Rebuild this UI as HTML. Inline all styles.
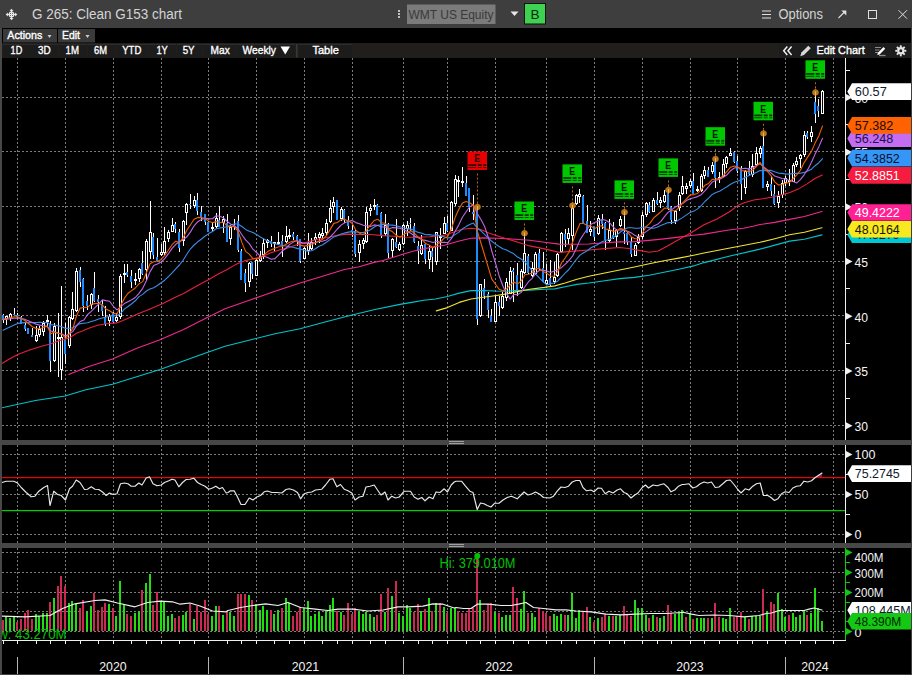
<!DOCTYPE html>
<html><head><meta charset="utf-8"><title>G 265: Clean G153 chart</title>
<style>html,body{margin:0;padding:0;background:#000;overflow:hidden}svg{display:block}text{font-family:"Liberation Sans",Arial,sans-serif}</style>
</head><body><svg width="912" height="675" viewBox="0 0 912 675" font-family="Liberation Sans, Arial, sans-serif"><rect x="0" y="0" width="912" height="675" fill="#000" />
<rect x="0" y="0" width="912" height="28" fill="#3e3e3e" />
<rect x="911" y="28" width="1" height="647" fill="#404040" />
<rect x="0" y="674" width="912" height="1" fill="#404040" />
<g stroke="#e8e8e8" stroke-width="1.2" fill="none"><circle cx="11.5" cy="14.5" r="2.3"/><path d="M11.5 10.0V19.0M7.0 14.5H16.0"/></g>
<g fill="#e8e8e8"><path d="M11.5 8.7l2 2.2h-4z M11.5 20.3l2 -2.2h-4z M5.7 14.5l2.2 -2v4z M17.3 14.5l-2.2 -2v4z"/></g>
<text x="32" y="19.1" font-size="14" fill="#d4d4d4" text-anchor="start" font-weight="normal" textLength="150" lengthAdjust="spacingAndGlyphs" >G 265: Clean G153 chart</text>
<rect x="398" y="10.2" width="2" height="1.6" fill="#e0e0e0" />
<rect x="398" y="13.2" width="2" height="1.6" fill="#e0e0e0" />
<rect x="398" y="16.2" width="2" height="1.6" fill="#e0e0e0" />
<rect x="407" y="4.5" width="88.5" height="19.5" fill="#7b7b7b" />
<text x="408.5" y="19" font-size="13" fill="#3a3a3a" text-anchor="start" font-weight="normal" textLength="85" lengthAdjust="spacingAndGlyphs" >WMT US Equity</text>
<path d="M510.5 11.5h8l-4 4.5z" fill="#e8e8e8"/>
<rect x="524" y="3" width="22" height="21.5" fill="#111" />
<rect x="525" y="4" width="20" height="19.5" fill="#3dd250" />
<text x="535" y="19" font-size="13.5" fill="#0c2a10" text-anchor="middle" font-weight="normal" >B</text>
<rect x="762" y="10.5" width="9" height="1" fill="#e0e0e0" />
<rect x="762" y="14" width="9" height="1" fill="#e0e0e0" />
<rect x="762" y="17.5" width="9" height="1" fill="#e0e0e0" />
<text x="778.5" y="19.3" font-size="14" fill="#d4d4d4" text-anchor="start" font-weight="normal" textLength="44.5" lengthAdjust="spacingAndGlyphs" >Options</text>
<path d="M838.5 18L845 11.5" stroke="#e0e0e0" stroke-width="1.1" fill="none"/><path d="M841.3 10.6h5v5z" fill="#e0e0e0"/>
<rect x="868.500" y="10.5" width="8" height="8" stroke="#e0e0e0" stroke-width="1" fill="none"/>
<path d="M898.500 10.2l8.500 8.500M907 10.2l-8.500 8.500" stroke="#e0e0e0" stroke-width="1" fill="none"/>
<rect x="3" y="29" width="54" height="13.5" fill="#3a3a3a" />
<rect x="58" y="29" width="37" height="13.5" fill="#3a3a3a" />
<text x="7.3" y="38.9" font-size="11" fill="#fff" text-anchor="start" font-weight="normal" textLength="35" lengthAdjust="spacingAndGlyphs"  stroke="#fff" stroke-width="0.35">Actions</text>
<path d="M47.5 35h4l-2 3z" fill="#ccc"/>
<text x="62" y="38.9" font-size="11" fill="#fff" text-anchor="start" font-weight="normal" textLength="18" lengthAdjust="spacingAndGlyphs"  stroke="#fff" stroke-width="0.35">Edit</text>
<path d="M85.5 35h4l-2 3z" fill="#ccc"/>
<rect x="2" y="43" width="909" height="15" fill="#211f1c" />
<rect x="3" y="44" width="28" height="13.5" fill="#1c1c1c" />
<rect x="3" y="44" width="28" height="1" fill="#2c2c2c" />
<text x="10.6" y="53.9" font-size="11" fill="#fff" text-anchor="start" font-weight="normal" textLength="11.6" lengthAdjust="spacingAndGlyphs"  stroke="#fff" stroke-width="0.35">1D</text>
<rect x="31" y="44" width="27" height="13.5" fill="#1c1c1c" />
<rect x="31" y="44" width="27" height="1" fill="#2c2c2c" />
<text x="37.9" y="53.9" font-size="11" fill="#fff" text-anchor="start" font-weight="normal" textLength="12.7" lengthAdjust="spacingAndGlyphs"  stroke="#fff" stroke-width="0.35">3D</text>
<rect x="59" y="44" width="28" height="13.5" fill="#1c1c1c" />
<rect x="59" y="44" width="28" height="1" fill="#2c2c2c" />
<text x="65.6" y="53.9" font-size="11" fill="#fff" text-anchor="start" font-weight="normal" textLength="13.4" lengthAdjust="spacingAndGlyphs"  stroke="#fff" stroke-width="0.35">1M</text>
<rect x="88" y="44" width="28" height="13.5" fill="#1c1c1c" />
<rect x="88" y="44" width="28" height="1" fill="#2c2c2c" />
<text x="94" y="53.9" font-size="11" fill="#fff" text-anchor="start" font-weight="normal" textLength="13" lengthAdjust="spacingAndGlyphs"  stroke="#fff" stroke-width="0.35">6M</text>
<rect x="117" y="44" width="30" height="13.5" fill="#1c1c1c" />
<rect x="117" y="44" width="30" height="1" fill="#2c2c2c" />
<text x="122.2" y="53.9" font-size="11" fill="#fff" text-anchor="start" font-weight="normal" textLength="19.1" lengthAdjust="spacingAndGlyphs"  stroke="#fff" stroke-width="0.35">YTD</text>
<rect x="148" y="44" width="28" height="13.5" fill="#1c1c1c" />
<rect x="148" y="44" width="28" height="1" fill="#2c2c2c" />
<text x="156.4" y="53.9" font-size="11" fill="#fff" text-anchor="start" font-weight="normal" textLength="11.4" lengthAdjust="spacingAndGlyphs"  stroke="#fff" stroke-width="0.35">1Y</text>
<rect x="177" y="44" width="25" height="13.5" fill="#1c1c1c" />
<rect x="177" y="44" width="25" height="1" fill="#2c2c2c" />
<text x="182.7" y="53.9" font-size="11" fill="#fff" text-anchor="start" font-weight="normal" textLength="11.9" lengthAdjust="spacingAndGlyphs"  stroke="#fff" stroke-width="0.35">5Y</text>
<rect x="203" y="44" width="33" height="13.5" fill="#1c1c1c" />
<rect x="203" y="44" width="33" height="1" fill="#2c2c2c" />
<text x="210.6" y="53.9" font-size="11" fill="#fff" text-anchor="start" font-weight="normal" textLength="19.1" lengthAdjust="spacingAndGlyphs"  stroke="#fff" stroke-width="0.35">Max</text>
<rect x="237" y="44" width="58" height="13.5" fill="#1c1c1c" />
<rect x="237" y="44" width="58" height="1" fill="#2c2c2c" />
<text x="242.5" y="53.9" font-size="11" fill="#fff" text-anchor="start" font-weight="normal" textLength="33.5" lengthAdjust="spacingAndGlyphs"  stroke="#fff" stroke-width="0.35">Weekly</text>
<rect x="299" y="44" width="53" height="13.5" fill="#1c1c1c" />
<rect x="299" y="44" width="53" height="1" fill="#2c2c2c" />
<text x="312.4" y="53.9" font-size="11" fill="#fff" text-anchor="start" font-weight="normal" textLength="26.5" lengthAdjust="spacingAndGlyphs"  stroke="#fff" stroke-width="0.35">Table</text>
<path d="M280.5 46.5h9.5l-4.75 8z" fill="#fff"/>
<rect x="296" y="44" width="1.5" height="13.5" fill="#3a3832" />
<rect x="779" y="44" width="16.5" height="13.5" fill="#1c1c1c" />
<rect x="796.5" y="44" width="73.5" height="13.5" fill="#1c1c1c" />
<rect x="871" y="44" width="19" height="13.5" fill="#1c1c1c" />
<rect x="891" y="44" width="19.5" height="13.5" fill="#1c1c1c" />
<path d="M787.3 46.5l-3.6 4.2l3.6 4.2M791.6 46.5l-3.6 4.2l3.6 4.2" stroke="#f0f0f0" stroke-width="1.5" fill="none"/>
<path d="M800.3 56.2l1.1 -3.6l6.9 -6.9l2.5 2.5l-6.9 6.9z" fill="#d8d8d8"/>
<text x="816.4" y="53.9" font-size="11" fill="#fff" text-anchor="start" font-weight="normal" textLength="48.3" lengthAdjust="spacingAndGlyphs"  stroke="#fff" stroke-width="0.35">Edit Chart</text>
<g stroke="#8c8c8c" stroke-width="1" fill="none"><path d="M875 47.5h6M875 50h4.500M875 52.500h3"/><path d="M879 55.500h6.500" stroke-width="1.3"/></g>
<path d="M877.2 55l0.700 -2.300l5.600 -5.600l1.700 1.700l-5.600 5.600z" fill="#fff"/>
<g stroke="#e6e6e6" fill="none"><circle cx="900.8" cy="50.8" r="2.6" stroke-width="2.2"/><path d="M904.20 50.80L906.30 50.80" stroke-width="1.9"/><path d="M903.20 53.20L904.69 54.69" stroke-width="1.9"/><path d="M900.80 54.20L900.80 56.30" stroke-width="1.9"/><path d="M898.40 53.20L896.91 54.69" stroke-width="1.9"/><path d="M897.40 50.80L895.30 50.80" stroke-width="1.9"/><path d="M898.40 48.40L896.91 46.91" stroke-width="1.9"/><path d="M900.80 47.40L900.80 45.30" stroke-width="1.9"/><path d="M903.20 48.40L904.69 46.91" stroke-width="1.9"/></g>
<rect x="2" y="440" width="909" height="5" fill="#474747" />
<rect x="2" y="543" width="909" height="5" fill="#474747" />
<rect x="449" y="441" width="15" height="1" fill="#a0a0a0" />
<rect x="449" y="443" width="15" height="1" fill="#a0a0a0" />
<rect x="449" y="544" width="15" height="1" fill="#a0a0a0" />
<rect x="449" y="546" width="15" height="1" fill="#a0a0a0" />
<g stroke="#7c7c7c" stroke-width="1" stroke-dasharray="2 2" shape-rendering="crispEdges" >
<path d="M17.5 58V440"/>
<path d="M17.5 445V543"/>
<path d="M17.5 548V640"/>
<path d="M65.5 58V440"/>
<path d="M65.5 445V543"/>
<path d="M65.5 548V640"/>
<path d="M113.5 58V440"/>
<path d="M113.5 445V543"/>
<path d="M113.5 548V640"/>
<path d="M161.5 58V440"/>
<path d="M161.5 445V543"/>
<path d="M161.5 548V640"/>
<path d="M208.5 58V440"/>
<path d="M208.5 445V543"/>
<path d="M208.5 548V640"/>
<path d="M256.5 58V440"/>
<path d="M256.5 445V543"/>
<path d="M256.5 548V640"/>
<path d="M304.5 58V440"/>
<path d="M304.5 445V543"/>
<path d="M304.5 548V640"/>
<path d="M352.5 58V440"/>
<path d="M352.5 445V543"/>
<path d="M352.5 548V640"/>
<path d="M403.5 58V440"/>
<path d="M403.5 445V543"/>
<path d="M403.5 548V640"/>
<path d="M447.5 58V440"/>
<path d="M447.5 445V543"/>
<path d="M447.5 548V640"/>
<path d="M495.5 58V440"/>
<path d="M495.5 445V543"/>
<path d="M495.5 548V640"/>
<path d="M546.5 58V440"/>
<path d="M546.5 445V543"/>
<path d="M546.5 548V640"/>
<path d="M594.5 58V440"/>
<path d="M594.5 445V543"/>
<path d="M594.5 548V640"/>
<path d="M642.5 58V440"/>
<path d="M642.5 445V543"/>
<path d="M642.5 548V640"/>
<path d="M690.5 58V440"/>
<path d="M690.5 445V543"/>
<path d="M690.5 548V640"/>
<path d="M737.5 58V440"/>
<path d="M737.5 445V543"/>
<path d="M737.5 548V640"/>
<path d="M785.5 58V440"/>
<path d="M785.5 445V543"/>
<path d="M785.5 548V640"/>
<path d="M833.5 58V440"/>
<path d="M833.5 445V543"/>
<path d="M833.5 548V640"/>
<path d="M2 97.5H845"/>
<path d="M2 151.5H845"/>
<path d="M2 206.5H845"/>
<path d="M2 261.5H845"/>
<path d="M2 315.5H845"/>
<path d="M2 370.5H845"/>
<path d="M2 425.5H845"/>
<path d="M2 454.5H845"/>
<path d="M2 494.5H845"/>
<path d="M2 534.5H845"/>
<path d="M2 552.5H845"/>
<path d="M2 572.5H845"/>
<path d="M2 592.5H845"/>
<path d="M2 611.5H845"/>
<path d="M2 631.5H845"/>
</g>
<g clip-path="url(#cm)">
<defs><clipPath id="cm"><rect x="2" y="58" width="843" height="382"/></clipPath></defs>
<g shape-rendering="crispEdges">
<rect x="3" y="314" width="1" height="9" fill="#fff" />
<rect x="2" y="315" width="2" height="5" fill="#1e8cff" />
<rect x="6" y="316" width="1" height="9" fill="#fff" />
<rect x="5.5" y="316.5" width="2" height="2" fill="#000" stroke="#fff" stroke-width="1"/>
<rect x="10" y="313" width="1" height="8" fill="#fff" />
<rect x="9.5" y="314.5" width="2" height="3" fill="#000" stroke="#fff" stroke-width="1"/>
<rect x="14" y="308" width="1" height="7" fill="#fff" />
<rect x="13" y="314" width="2" height="1" fill="#1e8cff" />
<rect x="17" y="313" width="1" height="6" fill="#fff" />
<rect x="16" y="315" width="2" height="2" fill="#1e8cff" />
<rect x="21" y="316" width="1" height="8" fill="#fff" />
<rect x="20" y="317" width="2" height="7" fill="#1e8cff" />
<rect x="25" y="322" width="1" height="9" fill="#fff" />
<rect x="24" y="325" width="2" height="4" fill="#1e8cff" />
<rect x="28" y="328" width="1" height="6" fill="#fff" />
<rect x="27" y="328" width="2" height="6" fill="#1e8cff" />
<rect x="32" y="328" width="1" height="9" fill="#fff" />
<rect x="31" y="335" width="2" height="2" fill="#1e8cff" />
<rect x="36" y="326" width="1" height="16" fill="#fff" />
<rect x="35.5" y="335.5" width="2" height="5" fill="#000" stroke="#fff" stroke-width="1"/>
<rect x="39" y="326" width="1" height="11" fill="#fff" />
<rect x="38.5" y="329.5" width="2" height="5" fill="#000" stroke="#fff" stroke-width="1"/>
<rect x="43" y="321" width="1" height="15" fill="#fff" />
<rect x="42.5" y="323.5" width="2" height="8" fill="#000" stroke="#fff" stroke-width="1"/>
<rect x="47" y="315" width="1" height="12" fill="#fff" />
<rect x="46" y="320" width="3" height="2" fill="#fff" />
<rect x="50" y="321" width="1" height="51" fill="#fff" />
<rect x="49" y="324" width="2" height="37" fill="#1e8cff" />
<rect x="54" y="323" width="1" height="39" fill="#fff" />
<rect x="53.5" y="326.5" width="2" height="34" fill="#000" stroke="#fff" stroke-width="1"/>
<rect x="58" y="313" width="1" height="64" fill="#fff" />
<rect x="57" y="337" width="3" height="2" fill="#fff" />
<rect x="61" y="286" width="1" height="94" fill="#fff" />
<rect x="60.5" y="337.5" width="2" height="32" fill="#000" stroke="#fff" stroke-width="1"/>
<rect x="65" y="323" width="1" height="41" fill="#fff" />
<rect x="64" y="339" width="2" height="15" fill="#1e8cff" />
<rect x="69" y="316" width="1" height="32" fill="#fff" />
<rect x="68.5" y="317.5" width="2" height="28" fill="#000" stroke="#fff" stroke-width="1"/>
<rect x="72" y="292" width="1" height="28" fill="#fff" />
<rect x="71.5" y="309.5" width="2" height="9" fill="#000" stroke="#fff" stroke-width="1"/>
<rect x="76" y="268" width="1" height="44" fill="#fff" />
<rect x="75.5" y="271.5" width="2" height="39" fill="#000" stroke="#fff" stroke-width="1"/>
<rect x="80" y="267" width="1" height="20" fill="#fff" />
<rect x="79" y="270" width="2" height="12" fill="#1e8cff" />
<rect x="83" y="278" width="1" height="34" fill="#fff" />
<rect x="82" y="279" width="2" height="27" fill="#1e8cff" />
<rect x="87" y="295" width="1" height="15" fill="#fff" />
<rect x="86" y="301" width="2" height="5" fill="#1e8cff" />
<rect x="91" y="293" width="1" height="16" fill="#fff" />
<rect x="90.5" y="294.5" width="2" height="10" fill="#000" stroke="#fff" stroke-width="1"/>
<rect x="94" y="272" width="1" height="30" fill="#fff" />
<rect x="93" y="288" width="2" height="13" fill="#1e8cff" />
<rect x="98" y="295" width="1" height="17" fill="#fff" />
<rect x="97" y="299" width="2" height="3" fill="#1e8cff" />
<rect x="102" y="300" width="1" height="16" fill="#fff" />
<rect x="101" y="304" width="2" height="7" fill="#1e8cff" />
<rect x="105" y="306" width="1" height="20" fill="#fff" />
<rect x="104" y="317" width="2" height="7" fill="#1e8cff" />
<rect x="109" y="314" width="1" height="12" fill="#fff" />
<rect x="108.5" y="316.5" width="2" height="4" fill="#000" stroke="#fff" stroke-width="1"/>
<rect x="113" y="312" width="1" height="11" fill="#fff" />
<rect x="112" y="313" width="2" height="9" fill="#1e8cff" />
<rect x="116" y="313" width="1" height="9" fill="#fff" />
<rect x="115.5" y="317.5" width="2" height="3" fill="#000" stroke="#fff" stroke-width="1"/>
<rect x="120" y="274" width="1" height="45" fill="#fff" />
<rect x="119.5" y="276.5" width="2" height="40" fill="#000" stroke="#fff" stroke-width="1"/>
<rect x="124" y="264" width="1" height="19" fill="#fff" />
<rect x="123" y="273" width="3" height="2" fill="#fff" />
<rect x="127" y="264" width="1" height="13" fill="#fff" />
<rect x="126" y="272" width="2" height="3" fill="#1e8cff" />
<rect x="131" y="270" width="1" height="18" fill="#fff" />
<rect x="130" y="276" width="2" height="6" fill="#1e8cff" />
<rect x="135" y="273" width="1" height="12" fill="#fff" />
<rect x="134" y="279" width="3" height="2" fill="#fff" />
<rect x="139" y="268" width="1" height="14" fill="#fff" />
<rect x="138.5" y="269.5" width="2" height="9" fill="#000" stroke="#fff" stroke-width="1"/>
<rect x="142" y="251" width="1" height="24" fill="#fff" />
<rect x="141" y="263" width="2" height="11" fill="#1e8cff" />
<rect x="146" y="239" width="1" height="41" fill="#fff" />
<rect x="145.5" y="241.5" width="2" height="28" fill="#000" stroke="#fff" stroke-width="1"/>
<rect x="150" y="201" width="1" height="58" fill="#fff" />
<rect x="149.5" y="232.5" width="2" height="19" fill="#000" stroke="#fff" stroke-width="1"/>
<rect x="153" y="233" width="1" height="26" fill="#fff" />
<rect x="152" y="237" width="2" height="18" fill="#1e8cff" />
<rect x="157" y="238" width="1" height="23" fill="#fff" />
<rect x="156" y="257" width="2" height="4" fill="#1e8cff" />
<rect x="161" y="244" width="1" height="12" fill="#fff" />
<rect x="160.5" y="252.5" width="2" height="2" fill="#000" stroke="#fff" stroke-width="1"/>
<rect x="164" y="227" width="1" height="28" fill="#fff" />
<rect x="163.5" y="241.5" width="2" height="11" fill="#000" stroke="#fff" stroke-width="1"/>
<rect x="168" y="230" width="1" height="12" fill="#fff" />
<rect x="167.5" y="232.5" width="2" height="6" fill="#000" stroke="#fff" stroke-width="1"/>
<rect x="172" y="218" width="1" height="14" fill="#fff" />
<rect x="171.5" y="225.5" width="2" height="6" fill="#000" stroke="#fff" stroke-width="1"/>
<rect x="175" y="222" width="1" height="11" fill="#fff" />
<rect x="174" y="224" width="2" height="5" fill="#1e8cff" />
<rect x="179" y="229" width="1" height="23" fill="#fff" />
<rect x="178" y="232" width="2" height="16" fill="#1e8cff" />
<rect x="183" y="220" width="1" height="26" fill="#fff" />
<rect x="182.5" y="221.5" width="2" height="19" fill="#000" stroke="#fff" stroke-width="1"/>
<rect x="186" y="203" width="1" height="22" fill="#fff" />
<rect x="185.5" y="204.5" width="2" height="8" fill="#000" stroke="#fff" stroke-width="1"/>
<rect x="190" y="194" width="1" height="15" fill="#fff" />
<rect x="189" y="204" width="2" height="1" fill="#1e8cff" />
<rect x="194" y="196" width="1" height="12" fill="#fff" />
<rect x="193.5" y="200.5" width="2" height="5" fill="#000" stroke="#fff" stroke-width="1"/>
<rect x="197" y="193" width="1" height="22" fill="#fff" />
<rect x="196" y="200" width="2" height="11" fill="#1e8cff" />
<rect x="201" y="206" width="1" height="15" fill="#fff" />
<rect x="200" y="212" width="2" height="6" fill="#1e8cff" />
<rect x="205" y="214" width="1" height="11" fill="#fff" />
<rect x="204" y="214" width="2" height="8" fill="#1e8cff" />
<rect x="208" y="221" width="1" height="11" fill="#fff" />
<rect x="207" y="222" width="2" height="10" fill="#1e8cff" />
<rect x="212" y="222" width="1" height="9" fill="#fff" />
<rect x="211" y="227" width="3" height="2" fill="#fff" />
<rect x="216" y="213" width="1" height="15" fill="#fff" />
<rect x="215.5" y="218.5" width="2" height="8" fill="#000" stroke="#fff" stroke-width="1"/>
<rect x="219" y="206" width="1" height="21" fill="#fff" />
<rect x="218" y="220" width="2" height="7" fill="#1e8cff" />
<rect x="223" y="216" width="1" height="17" fill="#fff" />
<rect x="222.5" y="219.5" width="2" height="3" fill="#000" stroke="#fff" stroke-width="1"/>
<rect x="227" y="214" width="1" height="28" fill="#fff" />
<rect x="226" y="223" width="2" height="19" fill="#1e8cff" />
<rect x="230" y="225" width="1" height="20" fill="#fff" />
<rect x="229.5" y="227.5" width="2" height="11" fill="#000" stroke="#fff" stroke-width="1"/>
<rect x="234" y="219" width="1" height="11" fill="#fff" />
<rect x="233" y="225" width="2" height="1" fill="#1e8cff" />
<rect x="238" y="215" width="1" height="37" fill="#fff" />
<rect x="237" y="221" width="2" height="29" fill="#1e8cff" />
<rect x="241" y="249" width="1" height="31" fill="#fff" />
<rect x="240" y="251" width="2" height="29" fill="#1e8cff" />
<rect x="245" y="269" width="1" height="23" fill="#fff" />
<rect x="244" y="273" width="2" height="10" fill="#1e8cff" />
<rect x="249" y="262" width="1" height="25" fill="#fff" />
<rect x="248.5" y="263.5" width="2" height="18" fill="#000" stroke="#fff" stroke-width="1"/>
<rect x="252" y="262" width="1" height="17" fill="#fff" />
<rect x="251" y="262" width="2" height="12" fill="#1e8cff" />
<rect x="256" y="259" width="1" height="17" fill="#fff" />
<rect x="255.5" y="260.5" width="2" height="15" fill="#000" stroke="#fff" stroke-width="1"/>
<rect x="260" y="251" width="1" height="11" fill="#fff" />
<rect x="259.5" y="256.5" width="2" height="4" fill="#000" stroke="#fff" stroke-width="1"/>
<rect x="263" y="239" width="1" height="20" fill="#fff" />
<rect x="262.5" y="243.5" width="2" height="11" fill="#000" stroke="#fff" stroke-width="1"/>
<rect x="267" y="239" width="1" height="9" fill="#fff" />
<rect x="266.5" y="240.5" width="2" height="2" fill="#000" stroke="#fff" stroke-width="1"/>
<rect x="271" y="236" width="1" height="11" fill="#fff" />
<rect x="270" y="241" width="2" height="3" fill="#1e8cff" />
<rect x="274" y="242" width="1" height="9" fill="#fff" />
<rect x="273" y="242" width="3" height="2" fill="#fff" />
<rect x="278" y="232" width="1" height="13" fill="#fff" />
<rect x="277" y="242" width="3" height="2" fill="#fff" />
<rect x="282" y="235" width="1" height="22" fill="#fff" />
<rect x="281" y="241" width="2" height="4" fill="#1e8cff" />
<rect x="286" y="226" width="1" height="17" fill="#fff" />
<rect x="285.5" y="236.5" width="2" height="5" fill="#000" stroke="#fff" stroke-width="1"/>
<rect x="289" y="229" width="1" height="10" fill="#fff" />
<rect x="288" y="235" width="3" height="2" fill="#fff" />
<rect x="293" y="232" width="1" height="8" fill="#fff" />
<rect x="292" y="234" width="2" height="3" fill="#1e8cff" />
<rect x="297" y="235" width="1" height="11" fill="#fff" />
<rect x="296" y="236" width="2" height="5" fill="#1e8cff" />
<rect x="300" y="239" width="1" height="24" fill="#fff" />
<rect x="299" y="239" width="2" height="22" fill="#1e8cff" />
<rect x="304" y="247" width="1" height="12" fill="#fff" />
<rect x="303.5" y="248.5" width="2" height="10" fill="#000" stroke="#fff" stroke-width="1"/>
<rect x="308" y="233" width="1" height="22" fill="#fff" />
<rect x="307.5" y="243.5" width="2" height="7" fill="#000" stroke="#fff" stroke-width="1"/>
<rect x="311" y="238" width="1" height="12" fill="#fff" />
<rect x="310.5" y="242.5" width="2" height="6" fill="#000" stroke="#fff" stroke-width="1"/>
<rect x="315" y="233" width="1" height="12" fill="#fff" />
<rect x="314.5" y="237.5" width="2" height="2" fill="#000" stroke="#fff" stroke-width="1"/>
<rect x="319" y="232" width="1" height="11" fill="#fff" />
<rect x="318.5" y="234.5" width="2" height="3" fill="#000" stroke="#fff" stroke-width="1"/>
<rect x="322" y="228" width="1" height="11" fill="#fff" />
<rect x="321.5" y="233.5" width="2" height="2" fill="#000" stroke="#fff" stroke-width="1"/>
<rect x="326" y="219" width="1" height="16" fill="#fff" />
<rect x="325.5" y="223.5" width="2" height="9" fill="#000" stroke="#fff" stroke-width="1"/>
<rect x="330" y="200" width="1" height="23" fill="#fff" />
<rect x="329.5" y="208.5" width="2" height="13" fill="#000" stroke="#fff" stroke-width="1"/>
<rect x="333" y="197" width="1" height="16" fill="#fff" />
<rect x="332.5" y="202.5" width="2" height="4" fill="#000" stroke="#fff" stroke-width="1"/>
<rect x="337" y="200" width="1" height="20" fill="#fff" />
<rect x="336" y="200" width="2" height="20" fill="#1e8cff" />
<rect x="341" y="207" width="1" height="14" fill="#fff" />
<rect x="340.5" y="209.5" width="2" height="9" fill="#000" stroke="#fff" stroke-width="1"/>
<rect x="344" y="209" width="1" height="14" fill="#fff" />
<rect x="343" y="210" width="2" height="9" fill="#1e8cff" />
<rect x="348" y="216" width="1" height="13" fill="#fff" />
<rect x="347" y="220" width="2" height="6" fill="#1e8cff" />
<rect x="352" y="225" width="1" height="12" fill="#fff" />
<rect x="351" y="230" width="2" height="2" fill="#1e8cff" />
<rect x="355" y="230" width="1" height="27" fill="#fff" />
<rect x="354" y="231" width="2" height="23" fill="#1e8cff" />
<rect x="359" y="240" width="1" height="22" fill="#fff" />
<rect x="358.5" y="244.5" width="2" height="8" fill="#000" stroke="#fff" stroke-width="1"/>
<rect x="363" y="238" width="1" height="11" fill="#fff" />
<rect x="362.5" y="240.5" width="2" height="3" fill="#000" stroke="#fff" stroke-width="1"/>
<rect x="366" y="207" width="1" height="36" fill="#fff" />
<rect x="365.5" y="212.5" width="2" height="29" fill="#000" stroke="#fff" stroke-width="1"/>
<rect x="370" y="204" width="1" height="12" fill="#fff" />
<rect x="369.5" y="208.5" width="2" height="2" fill="#000" stroke="#fff" stroke-width="1"/>
<rect x="374" y="199" width="1" height="11" fill="#fff" />
<rect x="373" y="205" width="3" height="2" fill="#fff" />
<rect x="377" y="204" width="1" height="11" fill="#fff" />
<rect x="376" y="205" width="2" height="10" fill="#1e8cff" />
<rect x="381" y="212" width="1" height="26" fill="#fff" />
<rect x="380" y="213" width="2" height="22" fill="#1e8cff" />
<rect x="385" y="214" width="1" height="22" fill="#fff" />
<rect x="384.5" y="225.5" width="2" height="8" fill="#000" stroke="#fff" stroke-width="1"/>
<rect x="388" y="223" width="1" height="35" fill="#fff" />
<rect x="387" y="224" width="2" height="29" fill="#1e8cff" />
<rect x="392" y="238" width="1" height="19" fill="#fff" />
<rect x="391.5" y="239.5" width="2" height="11" fill="#000" stroke="#fff" stroke-width="1"/>
<rect x="396" y="219" width="1" height="29" fill="#fff" />
<rect x="395" y="242" width="2" height="5" fill="#1e8cff" />
<rect x="399" y="242" width="1" height="9" fill="#fff" />
<rect x="398.5" y="244.5" width="2" height="5" fill="#000" stroke="#fff" stroke-width="1"/>
<rect x="403" y="224" width="1" height="21" fill="#fff" />
<rect x="402.5" y="225.5" width="2" height="18" fill="#000" stroke="#fff" stroke-width="1"/>
<rect x="407" y="221" width="1" height="15" fill="#fff" />
<rect x="406.5" y="225.5" width="2" height="3" fill="#000" stroke="#fff" stroke-width="1"/>
<rect x="410" y="218" width="1" height="13" fill="#fff" />
<rect x="409" y="223" width="2" height="1" fill="#1e8cff" />
<rect x="414" y="223" width="1" height="20" fill="#fff" />
<rect x="413" y="226" width="2" height="16" fill="#1e8cff" />
<rect x="418" y="241" width="1" height="23" fill="#fff" />
<rect x="417" y="246" width="2" height="5" fill="#1e8cff" />
<rect x="421" y="235" width="1" height="20" fill="#fff" />
<rect x="420.5" y="245.5" width="2" height="8" fill="#000" stroke="#fff" stroke-width="1"/>
<rect x="425" y="243" width="1" height="21" fill="#fff" />
<rect x="424" y="244" width="2" height="15" fill="#1e8cff" />
<rect x="429" y="245" width="1" height="24" fill="#fff" />
<rect x="428.5" y="251.5" width="2" height="8" fill="#000" stroke="#fff" stroke-width="1"/>
<rect x="432" y="248" width="1" height="24" fill="#fff" />
<rect x="431" y="251" width="2" height="6" fill="#1e8cff" />
<rect x="436" y="232" width="1" height="33" fill="#fff" />
<rect x="435.5" y="232.5" width="2" height="29" fill="#000" stroke="#fff" stroke-width="1"/>
<rect x="440" y="228" width="1" height="21" fill="#fff" />
<rect x="439" y="236" width="3" height="2" fill="#fff" />
<rect x="444" y="217" width="1" height="17" fill="#fff" />
<rect x="443.5" y="223.5" width="2" height="10" fill="#000" stroke="#fff" stroke-width="1"/>
<rect x="447" y="216" width="1" height="16" fill="#fff" />
<rect x="446" y="223" width="2" height="8" fill="#1e8cff" />
<rect x="451" y="201" width="1" height="30" fill="#fff" />
<rect x="450.5" y="202.5" width="2" height="28" fill="#000" stroke="#fff" stroke-width="1"/>
<rect x="455" y="175" width="1" height="31" fill="#fff" />
<rect x="454.5" y="179.5" width="2" height="24" fill="#000" stroke="#fff" stroke-width="1"/>
<rect x="458" y="176" width="1" height="21" fill="#fff" />
<rect x="457" y="180" width="3" height="2" fill="#fff" />
<rect x="462" y="167" width="1" height="20" fill="#fff" />
<rect x="461" y="181" width="3" height="2" fill="#fff" />
<rect x="466" y="176" width="1" height="20" fill="#fff" />
<rect x="465" y="183" width="2" height="13" fill="#1e8cff" />
<rect x="469" y="188" width="1" height="24" fill="#fff" />
<rect x="468" y="188" width="2" height="19" fill="#1e8cff" />
<rect x="473" y="195" width="1" height="25" fill="#fff" />
<rect x="472" y="212" width="2" height="2" fill="#1e8cff" />
<rect x="477" y="208" width="1" height="117" fill="#fff" />
<rect x="476" y="209" width="2" height="110" fill="#1e8cff" />
<rect x="480" y="284" width="1" height="33" fill="#fff" />
<rect x="479.5" y="284.5" width="2" height="31" fill="#000" stroke="#fff" stroke-width="1"/>
<rect x="484" y="279" width="1" height="20" fill="#fff" />
<rect x="483" y="288" width="2" height="8" fill="#1e8cff" />
<rect x="488" y="292" width="1" height="26" fill="#fff" />
<rect x="487" y="294" width="2" height="16" fill="#1e8cff" />
<rect x="491" y="309" width="1" height="13" fill="#fff" />
<rect x="490" y="316" width="2" height="6" fill="#1e8cff" />
<rect x="495" y="296" width="1" height="26" fill="#fff" />
<rect x="494.5" y="302.5" width="2" height="19" fill="#000" stroke="#fff" stroke-width="1"/>
<rect x="499" y="296" width="1" height="20" fill="#fff" />
<rect x="498" y="302" width="2" height="4" fill="#1e8cff" />
<rect x="502" y="292" width="1" height="17" fill="#fff" />
<rect x="501.5" y="296.5" width="2" height="11" fill="#000" stroke="#fff" stroke-width="1"/>
<rect x="506" y="278" width="1" height="23" fill="#fff" />
<rect x="505.5" y="282.5" width="2" height="15" fill="#000" stroke="#fff" stroke-width="1"/>
<rect x="510" y="267" width="1" height="27" fill="#fff" />
<rect x="509.5" y="271.5" width="2" height="22" fill="#000" stroke="#fff" stroke-width="1"/>
<rect x="513" y="268" width="1" height="34" fill="#fff" />
<rect x="512" y="270" width="2" height="2" fill="#1e8cff" />
<rect x="517" y="263" width="1" height="33" fill="#fff" />
<rect x="516" y="275" width="2" height="15" fill="#1e8cff" />
<rect x="521" y="269" width="1" height="20" fill="#fff" />
<rect x="520.5" y="271.5" width="2" height="16" fill="#000" stroke="#fff" stroke-width="1"/>
<rect x="524" y="236" width="1" height="38" fill="#fff" />
<rect x="523.5" y="253.5" width="2" height="19" fill="#000" stroke="#fff" stroke-width="1"/>
<rect x="528" y="254" width="1" height="20" fill="#fff" />
<rect x="527" y="256" width="2" height="17" fill="#1e8cff" />
<rect x="532" y="262" width="1" height="15" fill="#fff" />
<rect x="531.5" y="268.5" width="2" height="7" fill="#000" stroke="#fff" stroke-width="1"/>
<rect x="535" y="252" width="1" height="23" fill="#fff" />
<rect x="534.5" y="254.5" width="2" height="19" fill="#000" stroke="#fff" stroke-width="1"/>
<rect x="539" y="249" width="1" height="21" fill="#fff" />
<rect x="538" y="253" width="2" height="16" fill="#1e8cff" />
<rect x="543" y="252" width="1" height="30" fill="#fff" />
<rect x="542" y="268" width="2" height="14" fill="#1e8cff" />
<rect x="546" y="264" width="1" height="21" fill="#fff" />
<rect x="545.5" y="280.5" width="2" height="3" fill="#000" stroke="#fff" stroke-width="1"/>
<rect x="550" y="260" width="1" height="27" fill="#fff" />
<rect x="549" y="278" width="2" height="7" fill="#1e8cff" />
<rect x="554" y="262" width="1" height="22" fill="#fff" />
<rect x="553.5" y="277.5" width="2" height="4" fill="#000" stroke="#fff" stroke-width="1"/>
<rect x="557" y="253" width="1" height="24" fill="#fff" />
<rect x="556.5" y="254.5" width="2" height="21" fill="#000" stroke="#fff" stroke-width="1"/>
<rect x="561" y="232" width="1" height="21" fill="#fff" />
<rect x="560.5" y="233.5" width="2" height="18" fill="#000" stroke="#fff" stroke-width="1"/>
<rect x="565" y="229" width="1" height="18" fill="#fff" />
<rect x="564" y="234" width="2" height="6" fill="#1e8cff" />
<rect x="568" y="228" width="1" height="16" fill="#fff" />
<rect x="567.5" y="233.5" width="2" height="5" fill="#000" stroke="#fff" stroke-width="1"/>
<rect x="572" y="206" width="1" height="44" fill="#fff" />
<rect x="571.5" y="208.5" width="2" height="27" fill="#000" stroke="#fff" stroke-width="1"/>
<rect x="576" y="194" width="1" height="11" fill="#fff" />
<rect x="575.5" y="195.5" width="2" height="8" fill="#000" stroke="#fff" stroke-width="1"/>
<rect x="579" y="189" width="1" height="14" fill="#fff" />
<rect x="578.5" y="194.5" width="2" height="2" fill="#000" stroke="#fff" stroke-width="1"/>
<rect x="583" y="195" width="1" height="29" fill="#fff" />
<rect x="582" y="196" width="2" height="27" fill="#1e8cff" />
<rect x="587" y="205" width="1" height="28" fill="#fff" />
<rect x="586" y="221" width="2" height="12" fill="#1e8cff" />
<rect x="590" y="221" width="1" height="15" fill="#fff" />
<rect x="589.5" y="229.5" width="2" height="2" fill="#000" stroke="#fff" stroke-width="1"/>
<rect x="594" y="226" width="1" height="15" fill="#fff" />
<rect x="593" y="226" width="2" height="11" fill="#1e8cff" />
<rect x="598" y="215" width="1" height="20" fill="#fff" />
<rect x="597.5" y="218.5" width="2" height="15" fill="#000" stroke="#fff" stroke-width="1"/>
<rect x="602" y="214" width="1" height="15" fill="#fff" />
<rect x="601" y="219" width="2" height="5" fill="#1e8cff" />
<rect x="605" y="222" width="1" height="28" fill="#fff" />
<rect x="604" y="223" width="2" height="17" fill="#1e8cff" />
<rect x="609" y="219" width="1" height="23" fill="#fff" />
<rect x="608.5" y="230.5" width="2" height="10" fill="#000" stroke="#fff" stroke-width="1"/>
<rect x="613" y="222" width="1" height="17" fill="#fff" />
<rect x="612" y="235" width="2" height="3" fill="#1e8cff" />
<rect x="616" y="229" width="1" height="18" fill="#fff" />
<rect x="615.5" y="230.5" width="2" height="6" fill="#000" stroke="#fff" stroke-width="1"/>
<rect x="620" y="216" width="1" height="11" fill="#fff" />
<rect x="619.5" y="219.5" width="2" height="6" fill="#000" stroke="#fff" stroke-width="1"/>
<rect x="624" y="212" width="1" height="32" fill="#fff" />
<rect x="623" y="232" width="2" height="2" fill="#1e8cff" />
<rect x="627" y="232" width="1" height="13" fill="#fff" />
<rect x="626" y="233" width="2" height="9" fill="#1e8cff" />
<rect x="631" y="237" width="1" height="20" fill="#fff" />
<rect x="630" y="242" width="2" height="12" fill="#1e8cff" />
<rect x="635" y="243" width="1" height="13" fill="#fff" />
<rect x="634.5" y="245.5" width="2" height="10" fill="#000" stroke="#fff" stroke-width="1"/>
<rect x="638" y="234" width="1" height="10" fill="#fff" />
<rect x="637.5" y="237.5" width="2" height="5" fill="#000" stroke="#fff" stroke-width="1"/>
<rect x="642" y="212" width="1" height="27" fill="#fff" />
<rect x="641.5" y="215.5" width="2" height="21" fill="#000" stroke="#fff" stroke-width="1"/>
<rect x="646" y="202" width="1" height="15" fill="#fff" />
<rect x="645.5" y="203.5" width="2" height="11" fill="#000" stroke="#fff" stroke-width="1"/>
<rect x="649" y="202" width="1" height="11" fill="#fff" />
<rect x="648" y="205" width="2" height="7" fill="#1e8cff" />
<rect x="653" y="198" width="1" height="14" fill="#fff" />
<rect x="652.5" y="200.5" width="2" height="11" fill="#000" stroke="#fff" stroke-width="1"/>
<rect x="657" y="192" width="1" height="13" fill="#fff" />
<rect x="656" y="200" width="2" height="4" fill="#1e8cff" />
<rect x="660" y="197" width="1" height="11" fill="#fff" />
<rect x="659.5" y="200.5" width="2" height="2" fill="#000" stroke="#fff" stroke-width="1"/>
<rect x="664" y="190" width="1" height="13" fill="#fff" />
<rect x="663.5" y="195.5" width="2" height="6" fill="#000" stroke="#fff" stroke-width="1"/>
<rect x="668" y="190" width="1" height="20" fill="#fff" />
<rect x="667" y="193" width="2" height="16" fill="#1e8cff" />
<rect x="671" y="206" width="1" height="18" fill="#fff" />
<rect x="670" y="207" width="2" height="13" fill="#1e8cff" />
<rect x="675" y="210" width="1" height="14" fill="#fff" />
<rect x="674.5" y="211.5" width="2" height="9" fill="#000" stroke="#fff" stroke-width="1"/>
<rect x="679" y="192" width="1" height="19" fill="#fff" />
<rect x="678.5" y="195.5" width="2" height="12" fill="#000" stroke="#fff" stroke-width="1"/>
<rect x="682" y="176" width="1" height="19" fill="#fff" />
<rect x="681.5" y="186.5" width="2" height="7" fill="#000" stroke="#fff" stroke-width="1"/>
<rect x="686" y="183" width="1" height="11" fill="#fff" />
<rect x="685.5" y="186.5" width="2" height="2" fill="#000" stroke="#fff" stroke-width="1"/>
<rect x="690" y="179" width="1" height="9" fill="#fff" />
<rect x="689.5" y="181.5" width="2" height="4" fill="#000" stroke="#fff" stroke-width="1"/>
<rect x="693" y="173" width="1" height="21" fill="#fff" />
<rect x="692" y="181" width="2" height="13" fill="#1e8cff" />
<rect x="697" y="186" width="1" height="6" fill="#fff" />
<rect x="696" y="189" width="3" height="2" fill="#fff" />
<rect x="701" y="174" width="1" height="18" fill="#fff" />
<rect x="700.5" y="176.5" width="2" height="14" fill="#000" stroke="#fff" stroke-width="1"/>
<rect x="704" y="166" width="1" height="13" fill="#fff" />
<rect x="703.5" y="170.5" width="2" height="5" fill="#000" stroke="#fff" stroke-width="1"/>
<rect x="708" y="167" width="1" height="10" fill="#fff" />
<rect x="707" y="170" width="2" height="7" fill="#1e8cff" />
<rect x="712" y="162" width="1" height="12" fill="#fff" />
<rect x="711.5" y="165.5" width="2" height="6" fill="#000" stroke="#fff" stroke-width="1"/>
<rect x="715" y="159" width="1" height="29" fill="#fff" />
<rect x="714" y="162" width="2" height="16" fill="#1e8cff" />
<rect x="719" y="172" width="1" height="11" fill="#fff" />
<rect x="718" y="177" width="3" height="2" fill="#fff" />
<rect x="723" y="159" width="1" height="18" fill="#fff" />
<rect x="722.5" y="164.5" width="2" height="12" fill="#000" stroke="#fff" stroke-width="1"/>
<rect x="726" y="156" width="1" height="12" fill="#fff" />
<rect x="725.5" y="157.5" width="2" height="6" fill="#000" stroke="#fff" stroke-width="1"/>
<rect x="730" y="148" width="1" height="8" fill="#fff" />
<rect x="729.5" y="153.5" width="2" height="2" fill="#000" stroke="#fff" stroke-width="1"/>
<rect x="734" y="151" width="1" height="12" fill="#fff" />
<rect x="733" y="152" width="2" height="10" fill="#1e8cff" />
<rect x="737" y="156" width="1" height="17" fill="#fff" />
<rect x="736" y="161" width="2" height="10" fill="#1e8cff" />
<rect x="741" y="166" width="1" height="34" fill="#fff" />
<rect x="740" y="168" width="2" height="16" fill="#1e8cff" />
<rect x="745" y="170" width="1" height="24" fill="#fff" />
<rect x="744.5" y="171.5" width="2" height="16" fill="#000" stroke="#fff" stroke-width="1"/>
<rect x="749" y="161" width="1" height="14" fill="#fff" />
<rect x="748" y="168" width="2" height="6" fill="#1e8cff" />
<rect x="752" y="154" width="1" height="23" fill="#fff" />
<rect x="751.5" y="166.5" width="2" height="8" fill="#000" stroke="#fff" stroke-width="1"/>
<rect x="756" y="147" width="1" height="19" fill="#fff" />
<rect x="755.5" y="153.5" width="2" height="11" fill="#000" stroke="#fff" stroke-width="1"/>
<rect x="760" y="146" width="1" height="12" fill="#fff" />
<rect x="759.5" y="148.5" width="2" height="5" fill="#000" stroke="#fff" stroke-width="1"/>
<rect x="763" y="134" width="1" height="54" fill="#fff" />
<rect x="762" y="146" width="2" height="42" fill="#1e8cff" />
<rect x="767" y="181" width="1" height="10" fill="#fff" />
<rect x="766.5" y="184.5" width="2" height="2" fill="#000" stroke="#fff" stroke-width="1"/>
<rect x="771" y="176" width="1" height="20" fill="#fff" />
<rect x="770" y="184" width="2" height="7" fill="#1e8cff" />
<rect x="774" y="185" width="1" height="20" fill="#fff" />
<rect x="773" y="194" width="2" height="10" fill="#1e8cff" />
<rect x="778" y="191" width="1" height="17" fill="#fff" />
<rect x="777.5" y="196.5" width="2" height="6" fill="#000" stroke="#fff" stroke-width="1"/>
<rect x="782" y="180" width="1" height="18" fill="#fff" />
<rect x="781.5" y="183.5" width="2" height="11" fill="#000" stroke="#fff" stroke-width="1"/>
<rect x="785" y="176" width="1" height="10" fill="#fff" />
<rect x="784.5" y="178.5" width="2" height="4" fill="#000" stroke="#fff" stroke-width="1"/>
<rect x="789" y="169" width="1" height="17" fill="#fff" />
<rect x="788" y="180" width="3" height="2" fill="#fff" />
<rect x="793" y="163" width="1" height="19" fill="#fff" />
<rect x="792.5" y="165.5" width="2" height="16" fill="#000" stroke="#fff" stroke-width="1"/>
<rect x="796" y="157" width="1" height="10" fill="#fff" />
<rect x="795.5" y="161.5" width="2" height="3" fill="#000" stroke="#fff" stroke-width="1"/>
<rect x="800" y="154" width="1" height="14" fill="#fff" />
<rect x="799.5" y="155.5" width="2" height="3" fill="#000" stroke="#fff" stroke-width="1"/>
<rect x="804" y="131" width="1" height="26" fill="#fff" />
<rect x="803.5" y="135.5" width="2" height="19" fill="#000" stroke="#fff" stroke-width="1"/>
<rect x="807" y="131" width="1" height="8" fill="#fff" />
<rect x="806" y="133" width="2" height="4" fill="#1e8cff" />
<rect x="811" y="126" width="1" height="16" fill="#fff" />
<rect x="810.5" y="132.5" width="2" height="4" fill="#000" stroke="#fff" stroke-width="1"/>
<rect x="815" y="92" width="1" height="31" fill="#fff" />
<rect x="814" y="102" width="2" height="12" fill="#1e8cff" />
<rect x="818" y="99" width="1" height="18" fill="#fff" />
<rect x="817" y="106" width="2" height="5" fill="#1e8cff" />
<rect x="822" y="90" width="1" height="24" fill="#fff" />
<rect x="821.5" y="91.5" width="2" height="22" fill="#000" stroke="#fff" stroke-width="1"/>
</g>
<polyline points="1.5,407.9 35.5,400.5 65.0,396.0 85.9,389.8 112.5,384.3 160.0,369.4 200.0,355.0 225.0,346.3 250.0,340.0 275.0,333.8 300.0,328.8 325.0,322.0 350.0,315.5 375.0,309.5 400.0,304.4 411.8,302.4 423.7,300.2 435.5,299.0 447.4,296.5 459.2,293.1 471.0,290.6 483.0,290.5 494.8,291.0 506.6,291.2 514.8,290.6 529.6,290.1 544.4,289.3 554.8,288.9 565.1,286.7 577.0,284.4 588.8,283.0 604.8,280.7 619.6,278.6 634.4,277.4 649.2,275.2 664.0,272.2 678.8,269.3 693.6,265.9 704.0,262.6 730.0,256.0 760.0,249.1 789.6,241.1 804.4,239.3 822.0,234.9" fill="none" stroke="#00c4cc" stroke-width="1.1" stroke-linejoin="round" stroke-linecap="round" />
<polyline points="436.3,310.9 447.4,307.6 459.2,302.4 471.0,299.0 483.0,297.2 494.8,295.7 503.6,294.4 514.8,292.1 529.6,289.2 544.4,287.4 554.8,285.9 565.1,283.0 577.0,279.3 588.8,276.3 604.8,273.0 619.6,270.0 634.4,267.0 649.2,263.8 664.0,260.8 678.8,258.1 693.6,255.2 704.0,253.0 730.0,248.0 760.0,242.3 774.8,238.7 789.6,234.8 804.4,232.2 822.0,227.7" fill="none" stroke="#f2e230" stroke-width="1.1" stroke-linejoin="round" stroke-linecap="round" />
<polyline points="68.7,374.4 88.8,366.4 112.5,359.0 136.2,348.6 160.0,339.8 183.6,329.4 207.3,317.6 225.0,308.8 250.0,300.0 275.0,291.3 300.0,283.0 325.0,275.5 344.4,269.5 359.2,266.8 374.0,262.4 383.0,260.5 391.8,257.8 403.6,254.1 414.8,250.8 429.6,247.6 444.4,245.2 459.2,241.0 471.0,238.3 483.0,237.9 497.8,238.2 514.8,239.2 529.6,240.3 544.4,242.2 559.2,244.1 574.0,244.2 588.8,244.0 604.8,242.7 619.6,241.9 634.4,241.6 649.2,240.4 664.0,238.9 678.8,237.1 693.6,235.2 704.0,234.1 728.8,230.0 743.6,228.3 754.0,226.0 760.0,224.5 774.8,222.4 789.6,219.4 804.4,216.5 822.0,211.5" fill="none" stroke="#f02890" stroke-width="1.1" stroke-linejoin="round" stroke-linecap="round" />
<polyline points="2.2,363.3 8.9,359.3 17.8,354.4 29.6,350.0 41.5,346.3 50.3,344.0 59.2,340.7 69.6,337.7 77.0,333.0 82.9,330.7 88.8,328.2 97.7,325.3 106.6,323.7 116.7,322.9 123.0,320.4 137.5,314.1 150.0,308.9 162.4,303.8 175.9,297.0 183.6,293.5 198.5,285.0 208.9,279.4 217.8,274.3 226.7,269.8 235.5,264.6 244.4,260.9 253.3,258.7 262.2,256.5 271.0,252.8 280.0,249.8 288.8,247.6 296.2,244.9 303.6,243.1 308.9,241.5 317.8,239.3 329.6,237.0 338.5,235.1 347.4,234.1 359.2,234.5 371.0,234.5 382.9,235.6 394.8,236.3 403.6,237.0 414.8,237.4 429.6,236.7 444.4,235.2 453.3,232.2 462.2,229.3 471.0,228.2 480.0,229.3 488.8,233.0 500.7,237.0 514.8,241.2 529.6,245.9 544.4,248.9 559.2,252.4 574.0,251.1 588.8,250.0 604.8,248.6 619.6,247.5 628.5,248.5 638.9,250.4 649.2,252.2 658.1,251.0 667.0,246.3 678.8,239.6 690.7,233.0 704.0,224.8 717.0,218.9 728.8,212.2 737.7,205.6 744.9,202.5 753.8,200.0 762.7,198.7 771.5,197.2 780.4,195.0 789.3,192.8 798.2,189.1 807.0,183.9 814.5,178.7 822.2,175.0" fill="none" stroke="#e8203c" stroke-width="1.1" stroke-linejoin="round" stroke-linecap="round" />
<polyline points="3.1,330.3 6.7,328.6 10.4,326.8 14.1,325.1 17.8,323.4 21.4,322.9 25.1,322.6 28.8,322.5 32.5,322.6 36.1,322.6 39.8,322.3 43.5,322.5 47.2,322.6 50.8,324.6 54.5,325.0 58.2,325.8 61.9,326.7 65.5,328.4 69.2,328.3 72.9,327.8 76.6,325.4 80.2,323.6 83.9,323.2 87.6,322.8 91.3,321.6 94.9,320.5 98.6,319.1 102.3,317.9 105.9,317.3 109.6,316.3 113.3,316.0 117.0,315.7 120.6,313.5 124.3,309.1 128.0,306.5 131.7,303.7 135.3,300.8 139.0,296.6 142.7,294.4 146.4,291.0 150.0,289.1 153.7,287.7 157.4,285.5 161.1,282.8 164.7,280.2 168.4,276.7 172.1,272.9 175.8,268.8 179.4,265.0 183.1,260.3 186.8,254.3 190.5,248.8 194.1,245.0 197.8,241.8 201.5,239.0 205.2,236.0 208.8,233.6 212.5,231.5 216.2,228.7 219.9,228.0 223.5,227.4 227.2,226.7 230.9,225.1 234.6,223.8 238.2,224.2 241.9,226.5 245.6,229.4 249.3,231.2 252.9,232.5 256.6,234.4 260.3,237.0 264.0,238.9 267.6,240.9 271.3,242.6 275.0,243.8 278.7,244.8 282.3,245.5 286.0,246.0 289.7,246.8 293.4,247.3 297.0,248.4 300.7,249.3 304.4,250.4 308.1,251.2 311.7,250.8 315.4,248.7 319.1,246.2 322.8,244.7 326.4,242.2 330.1,239.6 333.8,236.9 337.4,235.7 341.1,234.1 344.8,232.9 348.5,232.1 352.1,231.6 355.8,232.0 359.5,232.4 363.2,232.6 366.8,231.4 370.5,229.8 374.2,227.0 377.9,225.3 381.5,224.9 385.2,224.1 388.9,224.9 392.6,225.1 396.2,225.8 399.9,226.8 403.6,227.7 407.3,228.9 410.9,229.1 414.6,230.8 418.3,232.4 422.0,233.3 425.6,234.7 429.3,234.6 433.0,235.2 436.7,234.8 440.3,236.0 444.0,236.8 447.7,238.0 451.4,237.4 455.0,234.6 458.7,232.4 462.4,228.8 466.1,226.6 469.7,224.6 473.4,223.1 477.1,227.8 480.8,230.7 484.4,234.3 488.1,237.7 491.8,241.3 495.5,244.1 499.1,246.5 502.8,248.8 506.5,250.0 510.2,252.0 513.8,253.8 517.5,257.1 521.2,259.1 524.9,261.7 528.5,266.4 532.2,270.7 535.9,274.4 539.6,278.1 543.2,281.8 546.9,285.1 550.6,283.4 554.2,283.0 557.9,280.9 561.6,277.0 565.3,272.9 568.9,269.5 572.6,264.5 576.3,259.5 580.0,255.1 583.6,252.7 587.3,250.7 591.0,247.7 594.7,245.9 598.3,244.2 602.0,241.8 605.7,240.4 609.4,239.2 613.0,237.7 616.7,235.1 620.4,232.0 624.1,229.5 627.7,227.7 631.4,227.7 635.1,228.3 638.8,228.2 642.4,227.3 646.1,227.0 649.8,227.9 653.5,228.2 657.1,227.2 660.8,225.6 664.5,223.9 668.2,222.5 671.8,222.6 675.5,221.9 679.2,219.6 682.9,217.4 686.5,214.9 690.2,212.4 693.9,211.1 697.6,208.9 701.2,205.6 704.9,201.5 708.6,198.1 712.3,194.4 715.9,192.6 719.6,191.3 723.3,188.9 727.0,186.7 730.6,184.2 734.3,182.3 738.0,181.1 741.7,179.8 745.3,177.3 749.0,175.5 752.7,174.1 756.4,172.4 760.0,170.5 763.7,170.8 767.4,170.4 771.1,170.4 774.7,171.8 778.4,173.1 782.1,173.4 785.7,174.0 789.4,174.1 793.1,173.5 796.8,173.4 800.4,173.3 804.1,172.4 807.8,171.1 811.5,169.2 815.1,165.7 818.8,162.7 822.5,158.6" fill="none" stroke="#3c8ce6" stroke-width="1.1" stroke-linejoin="round" stroke-linecap="round" />
<polyline points="3.1,319.6 6.7,319.3 10.4,318.7 14.1,318.3 17.8,318.0 21.4,318.5 25.1,319.4 28.8,320.9 32.5,322.6 36.1,324.2 39.8,325.1 43.5,325.8 47.2,326.4 50.8,331.0 54.5,331.9 58.2,333.2 61.9,334.0 65.5,336.0 69.2,334.0 72.9,331.4 76.6,325.7 80.2,321.5 83.9,320.0 87.6,314.5 91.3,311.3 94.9,307.7 98.6,304.2 102.3,299.9 105.9,300.6 109.6,301.2 113.3,306.3 117.0,309.9 120.6,306.9 124.3,303.6 128.0,301.7 131.7,299.8 135.3,297.5 139.0,293.3 142.7,288.3 146.4,280.8 150.0,271.9 153.7,265.6 157.4,264.1 161.1,262.0 164.7,258.7 168.4,253.7 172.1,248.4 175.8,244.3 179.4,241.7 183.1,239.7 186.8,236.8 190.5,231.9 194.1,225.8 197.8,221.7 201.5,219.4 205.2,218.3 208.8,218.9 212.5,218.7 216.2,215.7 219.9,216.3 223.5,217.9 227.2,221.5 230.9,224.3 234.6,225.8 238.2,229.0 241.9,234.8 245.6,239.9 249.3,243.6 252.9,249.2 256.6,252.5 260.3,256.2 264.0,256.3 267.6,257.6 271.3,259.3 275.0,258.6 278.7,254.8 282.3,251.0 286.0,248.3 289.7,244.4 293.4,242.1 297.0,240.6 300.7,242.4 304.4,243.2 308.1,243.1 311.7,243.0 315.4,242.5 319.1,241.4 322.8,241.1 326.4,239.9 330.1,237.1 333.8,233.1 337.4,229.0 341.1,225.1 344.8,222.8 348.5,221.2 352.1,220.6 355.8,222.6 359.5,223.7 363.2,225.3 366.8,225.7 370.5,226.4 374.2,224.9 377.9,225.5 381.5,227.0 385.2,227.0 388.9,229.1 392.6,227.6 396.2,227.9 399.9,228.3 403.6,229.7 407.3,231.4 410.9,233.3 414.6,236.1 418.3,237.7 422.0,239.7 425.6,240.4 429.3,241.5 433.0,242.5 436.7,241.3 440.3,242.4 444.0,242.2 447.7,242.8 451.4,238.7 455.0,231.5 458.7,225.1 462.4,217.2 466.1,211.7 469.7,206.7 473.4,204.9 477.1,213.2 480.8,219.3 484.4,225.9 488.1,236.7 491.8,251.0 495.5,263.2 499.1,275.7 502.8,285.8 506.5,293.4 510.2,299.1 513.8,294.3 517.5,294.9 521.2,292.4 524.9,286.7 528.5,281.7 532.2,278.3 535.9,273.0 539.6,270.3 543.2,270.2 546.9,271.1 550.6,272.4 554.2,271.1 557.9,269.4 561.6,267.4 565.3,264.1 568.9,260.6 572.6,256.0 576.3,248.6 580.0,239.9 583.6,234.3 587.3,229.0 591.0,224.2 594.7,222.5 598.3,221.0 602.0,219.4 605.7,220.2 609.4,222.5 613.0,226.7 616.7,230.2 620.4,229.8 624.1,229.9 627.7,231.2 631.4,232.9 635.1,235.6 638.8,236.9 642.4,234.3 646.1,231.6 649.8,229.1 653.5,226.1 657.1,224.6 660.8,221.3 664.5,216.6 668.2,212.2 671.8,209.6 675.5,206.9 679.2,204.9 682.9,203.2 686.5,200.6 690.2,198.7 693.9,197.7 697.6,196.6 701.2,194.7 704.9,190.8 708.6,186.5 712.3,181.9 715.9,180.3 719.6,179.3 723.3,177.2 727.0,174.8 730.6,170.7 734.3,168.0 738.0,167.4 741.7,168.8 745.3,168.2 749.0,169.1 752.7,167.8 756.4,165.5 760.0,163.8 763.7,166.9 767.4,170.0 771.1,172.9 774.7,176.1 778.4,177.3 782.1,178.5 785.7,178.9 789.4,180.4 793.1,181.6 796.8,182.9 800.4,179.6 804.1,174.8 807.8,169.4 811.5,162.3 815.1,154.1 818.8,146.9 822.5,138.2" fill="none" stroke="#c068e8" stroke-width="1.1" stroke-linejoin="round" stroke-linecap="round" />
<polyline points="3.1,319.1 6.7,318.5 10.4,317.5 14.1,316.9 17.8,317.0 21.4,318.5 25.1,320.8 28.8,323.8 32.5,326.8 36.1,328.6 39.8,328.7 43.5,327.5 47.2,325.9 50.8,333.7 54.5,332.0 58.2,333.2 61.9,334.0 65.5,338.5 69.2,333.8 72.9,328.3 76.6,315.6 80.2,308.1 83.9,307.5 87.6,307.1 91.3,304.3 94.9,303.6 98.6,303.2 102.3,304.9 105.9,309.1 109.6,310.7 113.3,313.2 117.0,314.1 120.6,305.6 124.3,298.4 128.0,293.2 131.7,290.6 135.3,288.0 139.0,283.9 142.7,281.6 146.4,272.7 150.0,263.7 153.7,261.7 157.4,261.5 161.1,259.4 164.7,255.4 168.4,250.3 172.1,244.7 175.8,241.2 179.4,242.7 183.1,237.9 186.8,230.3 190.5,224.8 194.1,219.2 197.8,217.4 201.5,217.6 205.2,218.5 208.8,221.4 212.5,222.6 216.2,221.6 219.9,222.8 223.5,222.0 227.2,226.4 230.9,226.6 234.6,226.6 238.2,231.7 241.9,242.4 245.6,251.4 249.3,254.1 252.9,258.6 256.6,258.9 260.3,258.2 264.0,254.9 267.6,251.6 271.3,249.8 275.0,248.2 278.7,246.8 282.3,246.5 286.0,244.3 289.7,242.2 293.4,241.0 297.0,241.0 300.7,245.4 304.4,246.1 308.1,245.3 311.7,244.5 315.4,242.8 319.1,241.0 322.8,239.2 326.4,235.7 330.1,229.6 333.8,223.4 337.4,222.5 341.1,219.6 344.8,219.5 348.5,220.9 352.1,223.3 355.8,230.1 359.5,233.2 363.2,234.7 366.8,229.7 370.5,224.9 374.2,220.5 377.9,219.3 381.5,222.7 385.2,223.3 388.9,229.8 392.6,231.8 396.2,235.3 399.9,237.2 403.6,234.6 407.3,232.6 410.9,230.7 414.6,233.3 418.3,237.3 422.0,239.1 425.6,243.6 429.3,245.1 433.0,247.8 436.7,244.3 440.3,242.4 444.0,238.2 447.7,236.5 451.4,228.8 455.0,217.8 458.7,209.5 462.4,203.1 466.1,201.5 469.7,202.7 473.4,205.2 477.1,230.6 480.8,242.5 484.4,254.5 488.1,266.8 491.8,279.1 495.5,284.2 499.1,289.2 502.8,290.8 506.5,288.9 510.2,285.0 513.8,282.0 517.5,283.9 521.2,281.0 524.9,274.8 528.5,274.3 532.2,272.9 535.9,268.6 539.6,268.7 543.2,271.5 546.9,273.4 550.6,276.0 554.2,276.3 557.9,271.2 561.6,262.8 565.3,257.7 568.9,252.3 572.6,242.3 576.3,231.9 580.0,223.5 583.6,223.5 587.3,225.5 591.0,226.3 594.7,228.6 598.3,226.3 602.0,225.8 605.7,229.1 609.4,229.4 613.0,231.2 616.7,230.9 620.4,228.2 624.1,229.4 627.7,232.2 631.4,237.0 635.1,238.8 638.8,238.5 642.4,233.2 646.1,226.6 649.8,223.4 653.5,218.2 657.1,215.0 660.8,211.8 664.5,208.1 668.2,208.3 671.8,210.8 675.5,210.8 679.2,207.3 682.9,202.6 686.5,198.9 690.2,194.9 693.9,194.6 697.6,193.4 701.2,189.6 704.9,185.3 708.6,183.4 712.3,179.4 715.9,179.1 719.6,178.6 723.3,175.5 727.0,171.3 730.6,167.2 734.3,166.0 738.0,167.1 741.7,170.8 745.3,170.9 749.0,171.6 752.7,170.3 756.4,166.5 760.0,162.4 763.7,168.0 767.4,171.5 771.1,175.7 774.7,181.9 778.4,185.0 782.1,184.6 785.7,183.1 789.4,182.5 793.1,178.7 796.8,174.8 800.4,170.3 804.1,162.6 807.8,156.9 811.5,151.4 815.1,143.1 818.8,135.9 822.5,126.0" fill="none" stroke="#f06000" stroke-width="1.1" stroke-linejoin="round" stroke-linecap="round" />
<rect x="467.5" y="151.5" width="19.5" height="18.5" fill="#e60000" />
<text x="477.2" y="162.3" font-size="11" fill="#200" text-anchor="middle" font-weight="bold" textLength="5.8" lengthAdjust="spacingAndGlyphs" >E</text>
<rect x="468.3" y="164.2" width="8" height="1.8" fill="#400000" />
<rect x="468.3" y="167" width="8" height="1" fill="#400000" />
<rect x="477.7" y="164.2" width="4" height="1.8" fill="#400000" />
<rect x="477.7" y="167" width="4" height="1" fill="#400000" />
<rect x="483.2" y="164.2" width="3" height="1.8" fill="#400000" />
<rect x="483.2" y="167" width="3" height="1" fill="#400000" />
<path d="M477.5 173.5V204" stroke="#b06c14" stroke-width="1" stroke-dasharray="2 2"/>
<ellipse cx="477.5" cy="207" rx="3.3" ry="3" fill="#b87418"/><path d="M477.5 202.8L480.1 207L477.5 211L474.9 207z" fill="#b87418"/>
<rect x="477" y="206" width="1" height="4.5" fill="#f0b060" />
<rect x="514.5" y="201.5" width="19.5" height="18.5" fill="#00c800" />
<text x="524.2" y="212.3" font-size="11" fill="#001400" text-anchor="middle" font-weight="bold" textLength="5.8" lengthAdjust="spacingAndGlyphs" >E</text>
<rect x="515.3" y="214.2" width="8" height="1.8" fill="#003800" />
<rect x="515.3" y="217" width="8" height="1" fill="#003800" />
<rect x="524.7" y="214.2" width="4" height="1.8" fill="#003800" />
<rect x="524.7" y="217" width="4" height="1" fill="#003800" />
<rect x="530.2" y="214.2" width="3" height="1.8" fill="#003800" />
<rect x="530.2" y="217" width="3" height="1" fill="#003800" />
<path d="M524.5 223.5V230.3" stroke="#b06c14" stroke-width="1" stroke-dasharray="2 2"/>
<ellipse cx="524.5" cy="233.3" rx="3.3" ry="3" fill="#b87418"/><path d="M524.5 229.10000000000002L527.1 233.3L524.5 237.3L521.9 233.3z" fill="#b87418"/>
<rect x="524" y="232.3" width="1" height="4.5" fill="#f0b060" />
<rect x="562.5" y="164.4" width="19.5" height="18.5" fill="#00c800" />
<text x="572.2" y="175.2" font-size="11" fill="#001400" text-anchor="middle" font-weight="bold" textLength="5.8" lengthAdjust="spacingAndGlyphs" >E</text>
<rect x="563.3" y="177.1" width="8" height="1.8" fill="#003800" />
<rect x="563.3" y="179.9" width="8" height="1" fill="#003800" />
<rect x="572.7" y="177.1" width="4" height="1.8" fill="#003800" />
<rect x="572.7" y="179.9" width="4" height="1" fill="#003800" />
<rect x="578.2" y="177.1" width="3" height="1.8" fill="#003800" />
<rect x="578.2" y="179.9" width="3" height="1" fill="#003800" />
<path d="M572.5 186.4V202.6" stroke="#b06c14" stroke-width="1" stroke-dasharray="2 2"/>
<ellipse cx="572.5" cy="205.6" rx="3.3" ry="3" fill="#b87418"/><path d="M572.5 201.4L575.1 205.6L572.5 209.6L569.9 205.6z" fill="#b87418"/>
<rect x="572" y="204.6" width="1" height="4.5" fill="#f0b060" />
<rect x="614.5" y="180.4" width="19.5" height="18.5" fill="#00c800" />
<text x="624.2" y="191.2" font-size="11" fill="#001400" text-anchor="middle" font-weight="bold" textLength="5.8" lengthAdjust="spacingAndGlyphs" >E</text>
<rect x="615.3" y="193.1" width="8" height="1.8" fill="#003800" />
<rect x="615.3" y="195.9" width="8" height="1" fill="#003800" />
<rect x="624.7" y="193.1" width="4" height="1.8" fill="#003800" />
<rect x="624.7" y="195.9" width="4" height="1" fill="#003800" />
<rect x="630.2" y="193.1" width="3" height="1.8" fill="#003800" />
<rect x="630.2" y="195.9" width="3" height="1" fill="#003800" />
<path d="M624.5 202.4V209.3" stroke="#b06c14" stroke-width="1" stroke-dasharray="2 2"/>
<ellipse cx="624.5" cy="212.3" rx="3.3" ry="3" fill="#b87418"/><path d="M624.5 208.10000000000002L627.1 212.3L624.5 216.3L621.9 212.3z" fill="#b87418"/>
<rect x="624" y="211.3" width="1" height="4.5" fill="#f0b060" />
<rect x="658.5" y="158.4" width="19.5" height="18.5" fill="#00c800" />
<text x="668.2" y="169.2" font-size="11" fill="#001400" text-anchor="middle" font-weight="bold" textLength="5.8" lengthAdjust="spacingAndGlyphs" >E</text>
<rect x="659.3" y="171.1" width="8" height="1.8" fill="#003800" />
<rect x="659.3" y="173.9" width="8" height="1" fill="#003800" />
<rect x="668.7" y="171.1" width="4" height="1.8" fill="#003800" />
<rect x="668.7" y="173.9" width="4" height="1" fill="#003800" />
<rect x="674.2" y="171.1" width="3" height="1.8" fill="#003800" />
<rect x="674.2" y="173.9" width="3" height="1" fill="#003800" />
<path d="M668.5 180.4V187" stroke="#b06c14" stroke-width="1" stroke-dasharray="2 2"/>
<ellipse cx="668.5" cy="190" rx="3.3" ry="3" fill="#b87418"/><path d="M668.5 185.8L671.1 190L668.5 194L665.9 190z" fill="#b87418"/>
<rect x="668" y="189" width="1" height="4.5" fill="#f0b060" />
<rect x="705.5" y="127.2" width="19.5" height="18.5" fill="#00c800" />
<text x="715.2" y="138" font-size="11" fill="#001400" text-anchor="middle" font-weight="bold" textLength="5.8" lengthAdjust="spacingAndGlyphs" >E</text>
<rect x="706.3" y="139.9" width="8" height="1.8" fill="#003800" />
<rect x="706.3" y="142.7" width="8" height="1" fill="#003800" />
<rect x="715.7" y="139.9" width="4" height="1.8" fill="#003800" />
<rect x="715.7" y="142.7" width="4" height="1" fill="#003800" />
<rect x="721.2" y="139.9" width="3" height="1.8" fill="#003800" />
<rect x="721.2" y="142.7" width="3" height="1" fill="#003800" />
<path d="M715.5 149.2V156" stroke="#b06c14" stroke-width="1" stroke-dasharray="2 2"/>
<ellipse cx="715.5" cy="159" rx="3.3" ry="3" fill="#b87418"/><path d="M715.5 154.8L718.1 159L715.5 163L712.9 159z" fill="#b87418"/>
<rect x="715" y="158" width="1" height="4.5" fill="#f0b060" />
<rect x="753.5" y="101.8" width="19.5" height="18.5" fill="#00c800" />
<text x="763.2" y="112.6" font-size="11" fill="#001400" text-anchor="middle" font-weight="bold" textLength="5.8" lengthAdjust="spacingAndGlyphs" >E</text>
<rect x="754.3" y="114.5" width="8" height="1.8" fill="#003800" />
<rect x="754.3" y="117.3" width="8" height="1" fill="#003800" />
<rect x="763.7" y="114.5" width="4" height="1.8" fill="#003800" />
<rect x="763.7" y="117.3" width="4" height="1" fill="#003800" />
<rect x="769.2" y="114.5" width="3" height="1.8" fill="#003800" />
<rect x="769.2" y="117.3" width="3" height="1" fill="#003800" />
<path d="M763.5 123.8V130.5" stroke="#b06c14" stroke-width="1" stroke-dasharray="2 2"/>
<ellipse cx="763.5" cy="133.5" rx="3.3" ry="3" fill="#b87418"/><path d="M763.5 129.3L766.1 133.5L763.5 137.5L760.9 133.5z" fill="#b87418"/>
<rect x="763" y="132.5" width="1" height="4.5" fill="#f0b060" />
<rect x="805.5" y="60.3" width="19.5" height="18.5" fill="#00c800" />
<text x="815.2" y="71.1" font-size="11" fill="#001400" text-anchor="middle" font-weight="bold" textLength="5.8" lengthAdjust="spacingAndGlyphs" >E</text>
<rect x="806.3" y="73" width="8" height="1.8" fill="#003800" />
<rect x="806.3" y="75.8" width="8" height="1" fill="#003800" />
<rect x="815.7" y="73" width="4" height="1.8" fill="#003800" />
<rect x="815.7" y="75.8" width="4" height="1" fill="#003800" />
<rect x="821.2" y="73" width="3" height="1.8" fill="#003800" />
<rect x="821.2" y="75.8" width="3" height="1" fill="#003800" />
<path d="M815.5 82.3V89.4" stroke="#b06c14" stroke-width="1" stroke-dasharray="2 2"/>
<ellipse cx="815.5" cy="92.4" rx="3.3" ry="3" fill="#b87418"/><path d="M815.5 88.2L818.1 92.4L815.5 96.4L812.9 92.4z" fill="#b87418"/>
<rect x="815" y="91.4" width="1" height="4.5" fill="#f0b060" />
</g>
<rect x="2" y="477" width="843" height="1.2" fill="#f00000" />
<rect x="2" y="510" width="843" height="1.2" fill="#00d000" />
<path d="M815 477.5L822 473V477.5z" fill="#902040"/>
<polyline points="2.0,482.5 6.2,481.2 13.8,481.2 17.5,483.0 21.2,487.5 26.2,492.5 31.2,496.8 35.0,496.2 38.8,491.2 43.8,487.5 47.5,485.5 50.0,505.5 53.8,491.2 57.5,494.5 61.2,495.5 65.5,500.0 69.5,488.8 72.5,486.2 76.2,480.0 80.0,482.5 84.5,489.5 87.5,489.2 91.2,486.8 95.0,489.2 98.8,489.5 102.5,492.0 106.2,495.5 109.5,493.0 113.0,494.5 117.0,493.8 120.5,483.8 124.5,483.0 128.0,483.8 131.2,486.2 135.0,486.2 138.8,483.0 142.0,485.0 146.2,478.0 149.5,476.8 153.0,483.8 157.0,485.8 161.2,485.0 164.5,482.5 168.8,480.8 172.0,479.2 175.0,480.0 178.8,486.8 182.5,482.5 186.2,479.5 190.0,479.2 193.8,478.2 197.5,482.5 201.2,484.5 205.0,486.2 208.8,489.2 212.5,488.0 215.8,486.2 219.5,488.8 222.5,487.5 226.2,493.0 228.0,492.5 230.5,490.8 234.2,490.8 237.5,497.0 241.0,504.5 245.0,504.5 249.2,498.0 253.0,500.0 256.8,497.0 260.5,495.5 264.2,491.8 267.5,491.0 271.8,492.5 276.8,492.5 281.8,493.0 286.0,489.5 289.2,488.8 293.5,490.0 297.5,492.5 300.5,498.8 304.2,493.8 308.0,492.5 311.8,492.0 315.5,490.0 321.8,489.2 325.5,485.0 330.0,479.2 333.0,478.8 336.8,486.8 340.5,484.5 344.2,489.2 348.0,490.8 351.8,493.0 355.0,500.0 359.2,497.0 363.0,496.2 366.0,487.0 370.0,486.2 374.2,485.0 377.5,490.0 381.0,495.0 385.0,492.0 388.0,500.0 391.8,496.2 395.5,498.0 399.2,497.0 404.2,491.2 410.5,491.2 414.2,497.0 418.0,499.2 421.8,497.5 425.0,500.8 429.2,497.0 433.0,498.8 436.0,492.0 440.0,492.5 444.2,488.8 447.5,492.0 451.2,485.0 454.2,482.0 456.0,481.2 461.5,481.2 465.5,486.2 469.8,491.2 473.0,492.5 477.2,509.5 480.5,503.0 484.0,503.8 487.2,505.5 491.0,507.0 494.8,503.2 499.0,503.2 503.0,500.0 507.2,497.5 511.5,496.2 517.2,498.8 520.5,495.5 524.0,492.0 528.0,495.0 532.2,493.8 535.5,492.0 539.8,494.2 543.5,497.5 549.8,498.0 553.5,496.2 557.2,491.2 561.0,487.0 564.8,487.5 568.5,486.2 572.2,482.0 576.0,480.5 579.8,480.5 583.0,487.5 586.5,490.8 591.0,490.0 594.0,491.8 598.0,488.0 601.5,488.2 605.2,493.8 609.0,491.2 613.0,493.0 617.2,490.0 620.5,488.8 624.0,492.5 627.2,493.8 631.0,498.0 634.8,495.0 638.0,493.0 642.2,487.5 645.5,485.0 648.5,488.0 653.0,485.0 657.2,485.8 661.0,484.5 664.0,483.8 668.0,487.5 671.0,491.8 674.8,490.0 678.5,486.2 682.2,484.5 684.0,484.5 689.0,483.8 692.8,488.0 696.5,486.8 700.2,483.8 704.0,482.0 707.8,483.0 711.5,482.0 715.2,487.5 719.0,487.0 722.8,483.8 726.5,480.5 730.2,480.0 734.0,484.5 737.8,489.5 741.0,493.0 745.2,488.8 749.0,490.0 752.8,486.2 756.5,483.8 760.2,483.0 763.5,495.5 767.8,495.5 771.0,497.5 774.5,500.5 777.8,498.8 781.5,493.8 785.2,491.8 789.0,492.5 792.8,488.0 796.5,486.2 800.2,485.8 804.0,481.2 807.8,482.0 811.5,480.8 815.2,477.5 819.0,475.0 822.0,473.0" fill="none" stroke="#e8e8e8" stroke-width="1.15" stroke-linejoin="round" stroke-linecap="round" />
<g shape-rendering="crispEdges">
<rect x="2" y="620" width="2" height="11" fill="#cc2852" />
<rect x="5" y="616" width="2" height="15" fill="#20de10" />
<rect x="9" y="618" width="2" height="13" fill="#20de10" />
<rect x="13" y="616" width="2" height="15" fill="#20de10" />
<rect x="16" y="622" width="2" height="9" fill="#cc2852" />
<rect x="20" y="619" width="2" height="12" fill="#cc2852" />
<rect x="24" y="613" width="2" height="18" fill="#cc2852" />
<rect x="27" y="610" width="2" height="21" fill="#cc2852" />
<rect x="31" y="619" width="2" height="12" fill="#cc2852" />
<rect x="35" y="614" width="2" height="17" fill="#20de10" />
<rect x="38" y="616" width="2" height="15" fill="#20de10" />
<rect x="42" y="613" width="2" height="18" fill="#20de10" />
<rect x="46" y="613" width="2" height="18" fill="#20de10" />
<rect x="49" y="602" width="2" height="29" fill="#cc2852" />
<rect x="53" y="598" width="2" height="33" fill="#20de10" />
<rect x="57" y="586" width="2" height="45" fill="#cc2852" />
<rect x="60" y="576" width="2" height="55" fill="#cc2852" />
<rect x="64" y="586" width="2" height="45" fill="#cc2852" />
<rect x="68" y="603" width="2" height="28" fill="#20de10" />
<rect x="71" y="601" width="2" height="30" fill="#20de10" />
<rect x="75" y="604" width="2" height="27" fill="#20de10" />
<rect x="79" y="608" width="2" height="23" fill="#cc2852" />
<rect x="82" y="600" width="2" height="31" fill="#cc2852" />
<rect x="86" y="611" width="2" height="20" fill="#20de10" />
<rect x="90" y="606" width="2" height="25" fill="#20de10" />
<rect x="93" y="593" width="2" height="38" fill="#cc2852" />
<rect x="97" y="610" width="2" height="21" fill="#cc2852" />
<rect x="101" y="607" width="2" height="24" fill="#cc2852" />
<rect x="104" y="603" width="2" height="28" fill="#cc2852" />
<rect x="108" y="604" width="2" height="27" fill="#20de10" />
<rect x="112" y="608" width="2" height="23" fill="#cc2852" />
<rect x="115" y="616" width="2" height="15" fill="#20de10" />
<rect x="119" y="581" width="2" height="50" fill="#20de10" />
<rect x="123" y="605" width="2" height="26" fill="#20de10" />
<rect x="126" y="614" width="2" height="17" fill="#cc2852" />
<rect x="130" y="616" width="2" height="15" fill="#cc2852" />
<rect x="134" y="613" width="2" height="18" fill="#20de10" />
<rect x="138" y="611" width="2" height="20" fill="#20de10" />
<rect x="141" y="590" width="2" height="41" fill="#cc2852" />
<rect x="145" y="583" width="2" height="48" fill="#20de10" />
<rect x="149" y="574" width="2" height="57" fill="#20de10" />
<rect x="152" y="605" width="2" height="26" fill="#cc2852" />
<rect x="156" y="592" width="2" height="39" fill="#cc2852" />
<rect x="160" y="601" width="2" height="30" fill="#20de10" />
<rect x="163" y="601" width="2" height="30" fill="#20de10" />
<rect x="167" y="616" width="2" height="15" fill="#20de10" />
<rect x="171" y="614" width="2" height="17" fill="#20de10" />
<rect x="174" y="618" width="2" height="13" fill="#cc2852" />
<rect x="178" y="616" width="2" height="15" fill="#cc2852" />
<rect x="182" y="615" width="2" height="16" fill="#20de10" />
<rect x="185" y="612" width="2" height="19" fill="#20de10" />
<rect x="189" y="604" width="2" height="27" fill="#cc2852" />
<rect x="193" y="619" width="2" height="12" fill="#20de10" />
<rect x="196" y="606" width="2" height="25" fill="#cc2852" />
<rect x="200" y="612" width="2" height="19" fill="#cc2852" />
<rect x="204" y="600" width="2" height="31" fill="#cc2852" />
<rect x="207" y="614" width="2" height="17" fill="#cc2852" />
<rect x="211" y="616" width="2" height="15" fill="#20de10" />
<rect x="215" y="606" width="2" height="25" fill="#20de10" />
<rect x="218" y="606" width="2" height="25" fill="#cc2852" />
<rect x="222" y="615" width="2" height="16" fill="#20de10" />
<rect x="226" y="611" width="2" height="20" fill="#cc2852" />
<rect x="229" y="612" width="2" height="19" fill="#20de10" />
<rect x="233" y="616" width="2" height="15" fill="#20de10" />
<rect x="237" y="594" width="2" height="37" fill="#cc2852" />
<rect x="240" y="594" width="2" height="37" fill="#cc2852" />
<rect x="244" y="594" width="2" height="37" fill="#cc2852" />
<rect x="248" y="595" width="2" height="36" fill="#20de10" />
<rect x="251" y="600" width="2" height="31" fill="#cc2852" />
<rect x="255" y="604" width="2" height="27" fill="#20de10" />
<rect x="259" y="610" width="2" height="21" fill="#20de10" />
<rect x="262" y="606" width="2" height="25" fill="#20de10" />
<rect x="266" y="610" width="2" height="21" fill="#20de10" />
<rect x="270" y="610" width="2" height="21" fill="#cc2852" />
<rect x="273" y="614" width="2" height="17" fill="#20de10" />
<rect x="277" y="610" width="2" height="21" fill="#20de10" />
<rect x="281" y="608" width="2" height="23" fill="#cc2852" />
<rect x="285" y="598" width="2" height="33" fill="#20de10" />
<rect x="288" y="603" width="2" height="28" fill="#20de10" />
<rect x="292" y="616" width="2" height="15" fill="#cc2852" />
<rect x="296" y="612" width="2" height="19" fill="#cc2852" />
<rect x="299" y="607" width="2" height="24" fill="#cc2852" />
<rect x="303" y="608" width="2" height="23" fill="#20de10" />
<rect x="307" y="601" width="2" height="30" fill="#20de10" />
<rect x="310" y="616" width="2" height="15" fill="#20de10" />
<rect x="314" y="614" width="2" height="17" fill="#20de10" />
<rect x="318" y="612" width="2" height="19" fill="#20de10" />
<rect x="321" y="616" width="2" height="15" fill="#20de10" />
<rect x="325" y="611" width="2" height="20" fill="#20de10" />
<rect x="329" y="605" width="2" height="26" fill="#20de10" />
<rect x="332" y="598" width="2" height="33" fill="#20de10" />
<rect x="336" y="611" width="2" height="20" fill="#cc2852" />
<rect x="340" y="612" width="2" height="19" fill="#20de10" />
<rect x="343" y="615" width="2" height="16" fill="#cc2852" />
<rect x="347" y="603" width="2" height="28" fill="#cc2852" />
<rect x="351" y="614" width="2" height="17" fill="#cc2852" />
<rect x="354" y="608" width="2" height="23" fill="#cc2852" />
<rect x="358" y="611" width="2" height="20" fill="#20de10" />
<rect x="362" y="614" width="2" height="17" fill="#20de10" />
<rect x="365" y="612" width="2" height="19" fill="#20de10" />
<rect x="369" y="614" width="2" height="17" fill="#20de10" />
<rect x="373" y="617" width="2" height="14" fill="#20de10" />
<rect x="376" y="615" width="2" height="16" fill="#cc2852" />
<rect x="380" y="594" width="2" height="37" fill="#cc2852" />
<rect x="384" y="612" width="2" height="19" fill="#20de10" />
<rect x="387" y="588" width="2" height="43" fill="#cc2852" />
<rect x="391" y="596" width="2" height="35" fill="#20de10" />
<rect x="395" y="581" width="2" height="50" fill="#cc2852" />
<rect x="398" y="613" width="2" height="18" fill="#20de10" />
<rect x="402" y="616" width="2" height="15" fill="#20de10" />
<rect x="406" y="605" width="2" height="26" fill="#20de10" />
<rect x="409" y="608" width="2" height="23" fill="#20de10" />
<rect x="413" y="612" width="2" height="19" fill="#cc2852" />
<rect x="417" y="604" width="2" height="27" fill="#cc2852" />
<rect x="420" y="611" width="2" height="20" fill="#20de10" />
<rect x="424" y="609" width="2" height="22" fill="#cc2852" />
<rect x="428" y="598" width="2" height="33" fill="#20de10" />
<rect x="431" y="611" width="2" height="20" fill="#cc2852" />
<rect x="435" y="603" width="2" height="28" fill="#20de10" />
<rect x="439" y="603" width="2" height="28" fill="#cc2852" />
<rect x="443" y="607" width="2" height="24" fill="#20de10" />
<rect x="446" y="613" width="2" height="18" fill="#cc2852" />
<rect x="450" y="608" width="2" height="23" fill="#20de10" />
<rect x="454" y="608" width="2" height="23" fill="#20de10" />
<rect x="457" y="611" width="2" height="20" fill="#cc2852" />
<rect x="461" y="613" width="2" height="18" fill="#cc2852" />
<rect x="465" y="613" width="2" height="18" fill="#cc2852" />
<rect x="468" y="609" width="2" height="22" fill="#cc2852" />
<rect x="472" y="608" width="2" height="23" fill="#cc2852" />
<rect x="476" y="557" width="2" height="74" fill="#cc2852" />
<rect x="479" y="600" width="2" height="31" fill="#20de10" />
<rect x="483" y="610" width="2" height="21" fill="#cc2852" />
<rect x="487" y="604" width="2" height="27" fill="#cc2852" />
<rect x="490" y="603" width="2" height="28" fill="#cc2852" />
<rect x="494" y="612" width="2" height="19" fill="#20de10" />
<rect x="498" y="613" width="2" height="18" fill="#cc2852" />
<rect x="501" y="617" width="2" height="14" fill="#20de10" />
<rect x="505" y="615" width="2" height="16" fill="#20de10" />
<rect x="509" y="615" width="2" height="16" fill="#20de10" />
<rect x="512" y="587" width="2" height="44" fill="#cc2852" />
<rect x="516" y="598" width="2" height="33" fill="#cc2852" />
<rect x="520" y="609" width="2" height="22" fill="#20de10" />
<rect x="523" y="591" width="2" height="40" fill="#20de10" />
<rect x="527" y="613" width="2" height="18" fill="#cc2852" />
<rect x="531" y="613" width="2" height="18" fill="#20de10" />
<rect x="534" y="617" width="2" height="14" fill="#20de10" />
<rect x="538" y="608" width="2" height="23" fill="#cc2852" />
<rect x="542" y="611" width="2" height="20" fill="#cc2852" />
<rect x="545" y="613" width="2" height="18" fill="#cc2852" />
<rect x="549" y="616" width="2" height="15" fill="#cc2852" />
<rect x="553" y="614" width="2" height="17" fill="#20de10" />
<rect x="556" y="616" width="2" height="15" fill="#20de10" />
<rect x="560" y="614" width="2" height="17" fill="#20de10" />
<rect x="564" y="615" width="2" height="16" fill="#cc2852" />
<rect x="567" y="615" width="2" height="16" fill="#20de10" />
<rect x="571" y="593" width="2" height="38" fill="#20de10" />
<rect x="575" y="618" width="2" height="13" fill="#20de10" />
<rect x="578" y="610" width="2" height="21" fill="#20de10" />
<rect x="582" y="611" width="2" height="20" fill="#cc2852" />
<rect x="586" y="607" width="2" height="24" fill="#cc2852" />
<rect x="589" y="617" width="2" height="14" fill="#20de10" />
<rect x="593" y="622" width="2" height="9" fill="#cc2852" />
<rect x="597" y="618" width="2" height="13" fill="#20de10" />
<rect x="601" y="617" width="2" height="14" fill="#cc2852" />
<rect x="604" y="614" width="2" height="17" fill="#cc2852" />
<rect x="608" y="616" width="2" height="15" fill="#20de10" />
<rect x="612" y="616" width="2" height="15" fill="#cc2852" />
<rect x="615" y="616" width="2" height="15" fill="#20de10" />
<rect x="619" y="615" width="2" height="16" fill="#20de10" />
<rect x="623" y="606" width="2" height="25" fill="#cc2852" />
<rect x="626" y="615" width="2" height="16" fill="#cc2852" />
<rect x="630" y="616" width="2" height="15" fill="#cc2852" />
<rect x="634" y="600" width="2" height="31" fill="#20de10" />
<rect x="637" y="608" width="2" height="23" fill="#20de10" />
<rect x="641" y="608" width="2" height="23" fill="#20de10" />
<rect x="645" y="615" width="2" height="16" fill="#20de10" />
<rect x="648" y="618" width="2" height="13" fill="#cc2852" />
<rect x="652" y="615" width="2" height="16" fill="#20de10" />
<rect x="656" y="617" width="2" height="14" fill="#cc2852" />
<rect x="659" y="618" width="2" height="13" fill="#20de10" />
<rect x="663" y="616" width="2" height="15" fill="#20de10" />
<rect x="667" y="605" width="2" height="26" fill="#cc2852" />
<rect x="670" y="613" width="2" height="18" fill="#cc2852" />
<rect x="674" y="614" width="2" height="17" fill="#20de10" />
<rect x="678" y="613" width="2" height="18" fill="#20de10" />
<rect x="681" y="610" width="2" height="21" fill="#20de10" />
<rect x="685" y="617" width="2" height="14" fill="#cc2852" />
<rect x="689" y="614" width="2" height="17" fill="#20de10" />
<rect x="692" y="619" width="2" height="12" fill="#cc2852" />
<rect x="696" y="618" width="2" height="13" fill="#20de10" />
<rect x="700" y="618" width="2" height="13" fill="#20de10" />
<rect x="703" y="618" width="2" height="13" fill="#20de10" />
<rect x="707" y="618" width="2" height="13" fill="#cc2852" />
<rect x="711" y="618" width="2" height="13" fill="#20de10" />
<rect x="714" y="603" width="2" height="28" fill="#cc2852" />
<rect x="718" y="617" width="2" height="14" fill="#cc2852" />
<rect x="722" y="618" width="2" height="13" fill="#20de10" />
<rect x="725" y="619" width="2" height="12" fill="#20de10" />
<rect x="729" y="608" width="2" height="23" fill="#20de10" />
<rect x="733" y="617" width="2" height="14" fill="#cc2852" />
<rect x="736" y="616" width="2" height="15" fill="#cc2852" />
<rect x="740" y="612" width="2" height="19" fill="#cc2852" />
<rect x="744" y="617" width="2" height="14" fill="#20de10" />
<rect x="748" y="619" width="2" height="12" fill="#cc2852" />
<rect x="751" y="616" width="2" height="15" fill="#20de10" />
<rect x="755" y="616" width="2" height="15" fill="#20de10" />
<rect x="759" y="616" width="2" height="15" fill="#20de10" />
<rect x="762" y="589" width="2" height="42" fill="#cc2852" />
<rect x="766" y="611" width="2" height="20" fill="#20de10" />
<rect x="770" y="602" width="2" height="29" fill="#cc2852" />
<rect x="773" y="604" width="2" height="27" fill="#cc2852" />
<rect x="777" y="593" width="2" height="38" fill="#20de10" />
<rect x="781" y="609" width="2" height="22" fill="#20de10" />
<rect x="784" y="617" width="2" height="14" fill="#20de10" />
<rect x="788" y="615" width="2" height="16" fill="#cc2852" />
<rect x="792" y="613" width="2" height="18" fill="#20de10" />
<rect x="795" y="617" width="2" height="14" fill="#20de10" />
<rect x="799" y="615" width="2" height="16" fill="#20de10" />
<rect x="803" y="611" width="2" height="20" fill="#20de10" />
<rect x="806" y="615" width="2" height="16" fill="#cc2852" />
<rect x="810" y="613" width="2" height="18" fill="#20de10" />
<rect x="814" y="588" width="2" height="43" fill="#20de10" />
<rect x="817" y="608" width="2" height="23" fill="#20de10" />
<rect x="821" y="621" width="2" height="10" fill="#20de10" />
</g>
<polyline points="2.0,616.2 25.0,616.8 50.0,615.5 62.5,608.5 75.0,603.8 95.0,600.5 105.0,599.8 117.5,603.0 135.0,606.8 147.5,602.5 160.0,601.2 172.5,601.8 180.0,604.2 190.0,603.0 200.0,606.0 212.5,611.0 226.2,611.8 228.0,610.5 240.5,607.5 253.0,605.5 265.5,603.8 278.0,605.5 288.0,602.5 300.5,607.5 315.5,609.2 328.0,610.5 338.0,609.2 353.0,609.2 368.0,611.0 383.0,610.0 398.0,606.8 408.0,606.8 423.0,606.2 433.0,603.8 443.0,604.2 454.2,608.0 456.0,607.5 463.5,608.5 471.0,608.5 477.2,604.2 488.5,604.2 501.0,605.5 511.0,605.5 518.5,604.2 526.0,602.5 533.5,607.5 543.5,608.5 556.0,609.8 566.0,609.8 576.0,611.0 591.0,611.8 606.0,614.2 621.0,614.8 636.0,614.2 651.0,613.5 666.0,613.5 682.2,612.5 684.0,612.5 691.5,614.2 699.0,615.5 714.0,615.0 729.0,615.5 744.0,616.8 759.0,615.5 766.5,613.5 771.5,613.0 779.0,610.5 789.0,610.5 804.0,610.5 809.0,609.2 814.0,608.0 822.0,610.0" fill="none" stroke="#f0f0f0" stroke-width="1.2" stroke-linejoin="round" stroke-linecap="round" />
<text x="439.5" y="568" font-size="14" fill="#00c400" text-anchor="start" font-weight="normal" textLength="76" lengthAdjust="spacingAndGlyphs" >Hi: 379.010M</text>
<circle cx="477.3" cy="556" r="3" fill="#00c400"/>
<text x="-16.5" y="638.5" font-size="14" fill="#00c400" text-anchor="start" font-weight="normal" textLength="83" lengthAdjust="spacingAndGlyphs" >Low: 43.270M</text>
<rect x="845" y="58" width="1" height="382" fill="#f0f0f0" />
<rect x="845" y="445" width="1" height="98" fill="#f0f0f0" />
<rect x="845" y="548" width="1" height="92" fill="#10c810" />
<rect x="2" y="640" width="844" height="1" fill="#f0f0f0" />
<path d="M846 94.0L852.5 97.5L846 101.0z" fill="#f0f0f0"/>
<text x="854.5" y="102.7" font-size="12.5" fill="#f4f4f4" text-anchor="start" font-weight="normal" textLength="13.5" lengthAdjust="spacingAndGlyphs" >60</text>
<path d="M846 148.7L852.5 152.2L846 155.7z" fill="#f0f0f0"/>
<text x="854.5" y="157.4" font-size="12.5" fill="#f4f4f4" text-anchor="start" font-weight="normal" textLength="13.5" lengthAdjust="spacingAndGlyphs" >55</text>
<path d="M846 203.39999999999998L852.5 206.89999999999998L846 210.39999999999998z" fill="#f0f0f0"/>
<text x="854.5" y="212.1" font-size="12.5" fill="#f4f4f4" text-anchor="start" font-weight="normal" textLength="13.5" lengthAdjust="spacingAndGlyphs" >50</text>
<path d="M846 258.1L852.5 261.6L846 265.1z" fill="#f0f0f0"/>
<text x="854.5" y="266.8" font-size="12.5" fill="#f4f4f4" text-anchor="start" font-weight="normal" textLength="13.5" lengthAdjust="spacingAndGlyphs" >45</text>
<path d="M846 312.79999999999995L852.5 316.29999999999995L846 319.79999999999995z" fill="#f0f0f0"/>
<text x="854.5" y="321.5" font-size="12.5" fill="#f4f4f4" text-anchor="start" font-weight="normal" textLength="13.5" lengthAdjust="spacingAndGlyphs" >40</text>
<path d="M846 367.5L852.5 371.0L846 374.5z" fill="#f0f0f0"/>
<text x="854.5" y="376.2" font-size="12.5" fill="#f4f4f4" text-anchor="start" font-weight="normal" textLength="13.5" lengthAdjust="spacingAndGlyphs" >35</text>
<path d="M846 422.2L852.5 425.7L846 429.2z" fill="#f0f0f0"/>
<text x="854.5" y="430.9" font-size="12.5" fill="#f4f4f4" text-anchor="start" font-weight="normal" textLength="13.5" lengthAdjust="spacingAndGlyphs" >30</text>
<rect x="846" y="70" width="4" height="1" fill="#f0f0f0" />
<rect x="846" y="124" width="4" height="1" fill="#f0f0f0" />
<rect x="846" y="179" width="4" height="1" fill="#f0f0f0" />
<rect x="846" y="234" width="4" height="1" fill="#f0f0f0" />
<rect x="846" y="288" width="4" height="1" fill="#f0f0f0" />
<rect x="846" y="343" width="4" height="1" fill="#f0f0f0" />
<rect x="846" y="398" width="4" height="1" fill="#f0f0f0" />
<path d="M846 451.0L852.5 454.5L846 458.0z" fill="#f0f0f0"/>
<text x="854.5" y="459.3" font-size="12.5" fill="#f4f4f4" text-anchor="start" font-weight="normal" >100</text>
<path d="M846 491.0L852.5 494.5L846 498.0z" fill="#f0f0f0"/>
<text x="854.5" y="499.3" font-size="12.5" fill="#f4f4f4" text-anchor="start" font-weight="normal" >50</text>
<path d="M846 531.0L852.5 534.5L846 538.0z" fill="#f0f0f0"/>
<text x="854.5" y="539.3" font-size="12.5" fill="#f4f4f4" text-anchor="start" font-weight="normal" >0</text>
<rect x="846" y="474" width="4" height="1" fill="#f0f0f0" />
<rect x="846" y="514" width="4" height="1" fill="#f0f0f0" />
<path d="M846 549.0L852.5 552.5L846 556.0z" fill="#10c810"/>
<text x="854.5" y="562" font-size="12.5" fill="#f4f4f4" text-anchor="start" font-weight="normal" textLength="29" lengthAdjust="spacingAndGlyphs" >400M</text>
<path d="M846 569.0L852.5 572.5L846 576.0z" fill="#10c810"/>
<text x="854.5" y="577.7" font-size="12.5" fill="#f4f4f4" text-anchor="start" font-weight="normal" textLength="29" lengthAdjust="spacingAndGlyphs" >300M</text>
<path d="M846 589.0L852.5 592.5L846 596.0z" fill="#10c810"/>
<text x="854.5" y="596.8" font-size="12.5" fill="#f4f4f4" text-anchor="start" font-weight="normal" textLength="29" lengthAdjust="spacingAndGlyphs" >200M</text>
<path d="M846 628.0L852.5 631.5L846 635.0z" fill="#10c810"/>
<text x="854.5" y="637" font-size="12.5" fill="#f4f4f4" text-anchor="start" font-weight="normal" >0</text>
<rect x="846" y="562" width="4" height="1" fill="#10c810" />
<rect x="846" y="582" width="4" height="1" fill="#10c810" />
<rect x="846" y="602" width="4" height="1" fill="#10c810" />
<rect x="846" y="621" width="4" height="1" fill="#10c810" />
<path d="M847.3 234.8L852 226.5H911V243.10000000000002H852z" fill="#00c8d2"/>
<text x="854.8" y="239.4" font-size="12.8" fill="#0a1a2a" text-anchor="start" font-weight="normal" textLength="45" lengthAdjust="spacingAndGlyphs" >47.5279</text>
<path d="M847.3 229.3L852 221.0H911V237.60000000000002H852z" fill="#f8e820"/>
<text x="854.8" y="233.9" font-size="12.8" fill="#141400" text-anchor="start" font-weight="normal" textLength="45" lengthAdjust="spacingAndGlyphs" >48.0164</text>
<path d="M847.3 212.5L852 204.2H911V220.8H852z" fill="#ff2094"/>
<text x="854.8" y="217.1" font-size="12.8" fill="#fff" text-anchor="start" font-weight="normal" textLength="45" lengthAdjust="spacingAndGlyphs" >49.4222</text>
<path d="M847.3 175.4L852 167.1H911V183.70000000000002H852z" fill="#f51c40"/>
<text x="854.8" y="180" font-size="12.8" fill="#fff" text-anchor="start" font-weight="normal" textLength="45" lengthAdjust="spacingAndGlyphs" >52.8851</text>
<path d="M847.3 158.1L852 149.79999999999998H911V166.4H852z" fill="#3596f8"/>
<text x="854.8" y="162.7" font-size="12.8" fill="#06102a" text-anchor="start" font-weight="normal" textLength="45" lengthAdjust="spacingAndGlyphs" >54.3852</text>
<path d="M847.3 138.6L852 130.29999999999998H911V146.9H852z" fill="#c46cf2"/>
<text x="854.8" y="143.2" font-size="12.8" fill="#1a1050" text-anchor="start" font-weight="normal" textLength="38.5" lengthAdjust="spacingAndGlyphs" >56.248</text>
<path d="M847.3 125.4L852 117.10000000000001H911V133.70000000000002H852z" fill="#ff6200"/>
<text x="854.8" y="130" font-size="12.8" fill="#1a0800" text-anchor="start" font-weight="normal" textLength="38.5" lengthAdjust="spacingAndGlyphs" >57.382</text>
<path d="M847.3 91.6L852 83.3H911V99.89999999999999H852z" fill="#fff"/>
<text x="854.8" y="96.2" font-size="12.8" fill="#10182c" text-anchor="start" font-weight="normal" textLength="32" lengthAdjust="spacingAndGlyphs" >60.57</text>
<path d="M847.3 473.6L852 465.3H911V481.90000000000003H852z" fill="#fff"/>
<text x="854.8" y="478.2" font-size="12.8" fill="#10182c" text-anchor="start" font-weight="normal" textLength="45" lengthAdjust="spacingAndGlyphs" >75.2745</text>
<path d="M847.3 610.3L852 602.0H911V618.5999999999999H852z" fill="#fff"/>
<text x="854.8" y="614.9" font-size="12.8" fill="#10182c" text-anchor="start" font-weight="normal" textLength="56" lengthAdjust="spacingAndGlyphs" >108.445M</text>
<path d="M847.3 621.2L852 612.9000000000001H911V629.5H852z" fill="#14c814"/>
<text x="854.8" y="625.8" font-size="12.8" fill="#002800" text-anchor="start" font-weight="normal" textLength="46.5" lengthAdjust="spacingAndGlyphs" >48.390M</text>
<rect x="3" y="641" width="1" height="3" fill="#f0f0f0" />
<rect x="17" y="641" width="1" height="3" fill="#f0f0f0" />
<rect x="36" y="641" width="1" height="3" fill="#f0f0f0" />
<rect x="50" y="641" width="1" height="3" fill="#f0f0f0" />
<rect x="65" y="641" width="1" height="3" fill="#f0f0f0" />
<rect x="80" y="641" width="1" height="3" fill="#f0f0f0" />
<rect x="98" y="641" width="1" height="3" fill="#f0f0f0" />
<rect x="113" y="641" width="1" height="3" fill="#f0f0f0" />
<rect x="131" y="641" width="1" height="3" fill="#f0f0f0" />
<rect x="146" y="641" width="1" height="3" fill="#f0f0f0" />
<rect x="161" y="641" width="1" height="3" fill="#f0f0f0" />
<rect x="179" y="641" width="1" height="3" fill="#f0f0f0" />
<rect x="194" y="641" width="1" height="3" fill="#f0f0f0" />
<rect x="208" y="641" width="1" height="3" fill="#f0f0f0" />
<rect x="227" y="641" width="1" height="3" fill="#f0f0f0" />
<rect x="241" y="641" width="1" height="3" fill="#f0f0f0" />
<rect x="256" y="641" width="1" height="3" fill="#f0f0f0" />
<rect x="274" y="641" width="1" height="3" fill="#f0f0f0" />
<rect x="289" y="641" width="1" height="3" fill="#f0f0f0" />
<rect x="304" y="641" width="1" height="3" fill="#f0f0f0" />
<rect x="322" y="641" width="1" height="3" fill="#f0f0f0" />
<rect x="337" y="641" width="1" height="3" fill="#f0f0f0" />
<rect x="352" y="641" width="1" height="3" fill="#f0f0f0" />
<rect x="370" y="641" width="1" height="3" fill="#f0f0f0" />
<rect x="385" y="641" width="1" height="3" fill="#f0f0f0" />
<rect x="403" y="641" width="1" height="3" fill="#f0f0f0" />
<rect x="418" y="641" width="1" height="3" fill="#f0f0f0" />
<rect x="432" y="641" width="1" height="3" fill="#f0f0f0" />
<rect x="447" y="641" width="1" height="3" fill="#f0f0f0" />
<rect x="466" y="641" width="1" height="3" fill="#f0f0f0" />
<rect x="480" y="641" width="1" height="3" fill="#f0f0f0" />
<rect x="495" y="641" width="1" height="3" fill="#f0f0f0" />
<rect x="513" y="641" width="1" height="3" fill="#f0f0f0" />
<rect x="528" y="641" width="1" height="3" fill="#f0f0f0" />
<rect x="546" y="641" width="1" height="3" fill="#f0f0f0" />
<rect x="561" y="641" width="1" height="3" fill="#f0f0f0" />
<rect x="576" y="641" width="1" height="3" fill="#f0f0f0" />
<rect x="594" y="641" width="1" height="3" fill="#f0f0f0" />
<rect x="609" y="641" width="1" height="3" fill="#f0f0f0" />
<rect x="624" y="641" width="1" height="3" fill="#f0f0f0" />
<rect x="642" y="641" width="1" height="3" fill="#f0f0f0" />
<rect x="657" y="641" width="1" height="3" fill="#f0f0f0" />
<rect x="671" y="641" width="1" height="3" fill="#f0f0f0" />
<rect x="690" y="641" width="1" height="3" fill="#f0f0f0" />
<rect x="704" y="641" width="1" height="3" fill="#f0f0f0" />
<rect x="719" y="641" width="1" height="3" fill="#f0f0f0" />
<rect x="737" y="641" width="1" height="3" fill="#f0f0f0" />
<rect x="752" y="641" width="1" height="3" fill="#f0f0f0" />
<rect x="767" y="641" width="1" height="3" fill="#f0f0f0" />
<rect x="785" y="641" width="1" height="3" fill="#f0f0f0" />
<rect x="800" y="641" width="1" height="3" fill="#f0f0f0" />
<rect x="815" y="641" width="1" height="3" fill="#f0f0f0" />
<rect x="833" y="641" width="1" height="3" fill="#f0f0f0" />
<rect x="17" y="657" width="1" height="17" fill="#b4b4b4" />
<rect x="208" y="657" width="1" height="17" fill="#b4b4b4" />
<rect x="403" y="657" width="1" height="17" fill="#b4b4b4" />
<rect x="594" y="657" width="1" height="17" fill="#b4b4b4" />
<rect x="785" y="657" width="1" height="17" fill="#b4b4b4" />
<text x="113" y="670.8" font-size="12.5" fill="#f4f4f4" text-anchor="middle" font-weight="normal" textLength="27.5" lengthAdjust="spacingAndGlyphs" >2020</text>
<text x="305.5" y="670.8" font-size="12.5" fill="#f4f4f4" text-anchor="middle" font-weight="normal" textLength="27.5" lengthAdjust="spacingAndGlyphs" >2021</text>
<text x="499" y="670.8" font-size="12.5" fill="#f4f4f4" text-anchor="middle" font-weight="normal" textLength="27.5" lengthAdjust="spacingAndGlyphs" >2022</text>
<text x="690" y="670.8" font-size="12.5" fill="#f4f4f4" text-anchor="middle" font-weight="normal" textLength="27.5" lengthAdjust="spacingAndGlyphs" >2023</text>
<text x="815" y="670.8" font-size="12.5" fill="#f4f4f4" text-anchor="middle" font-weight="normal" textLength="27.5" lengthAdjust="spacingAndGlyphs" >2024</text>
<rect x="0" y="28" width="2" height="647" fill="#484848" /></svg></body></html>
